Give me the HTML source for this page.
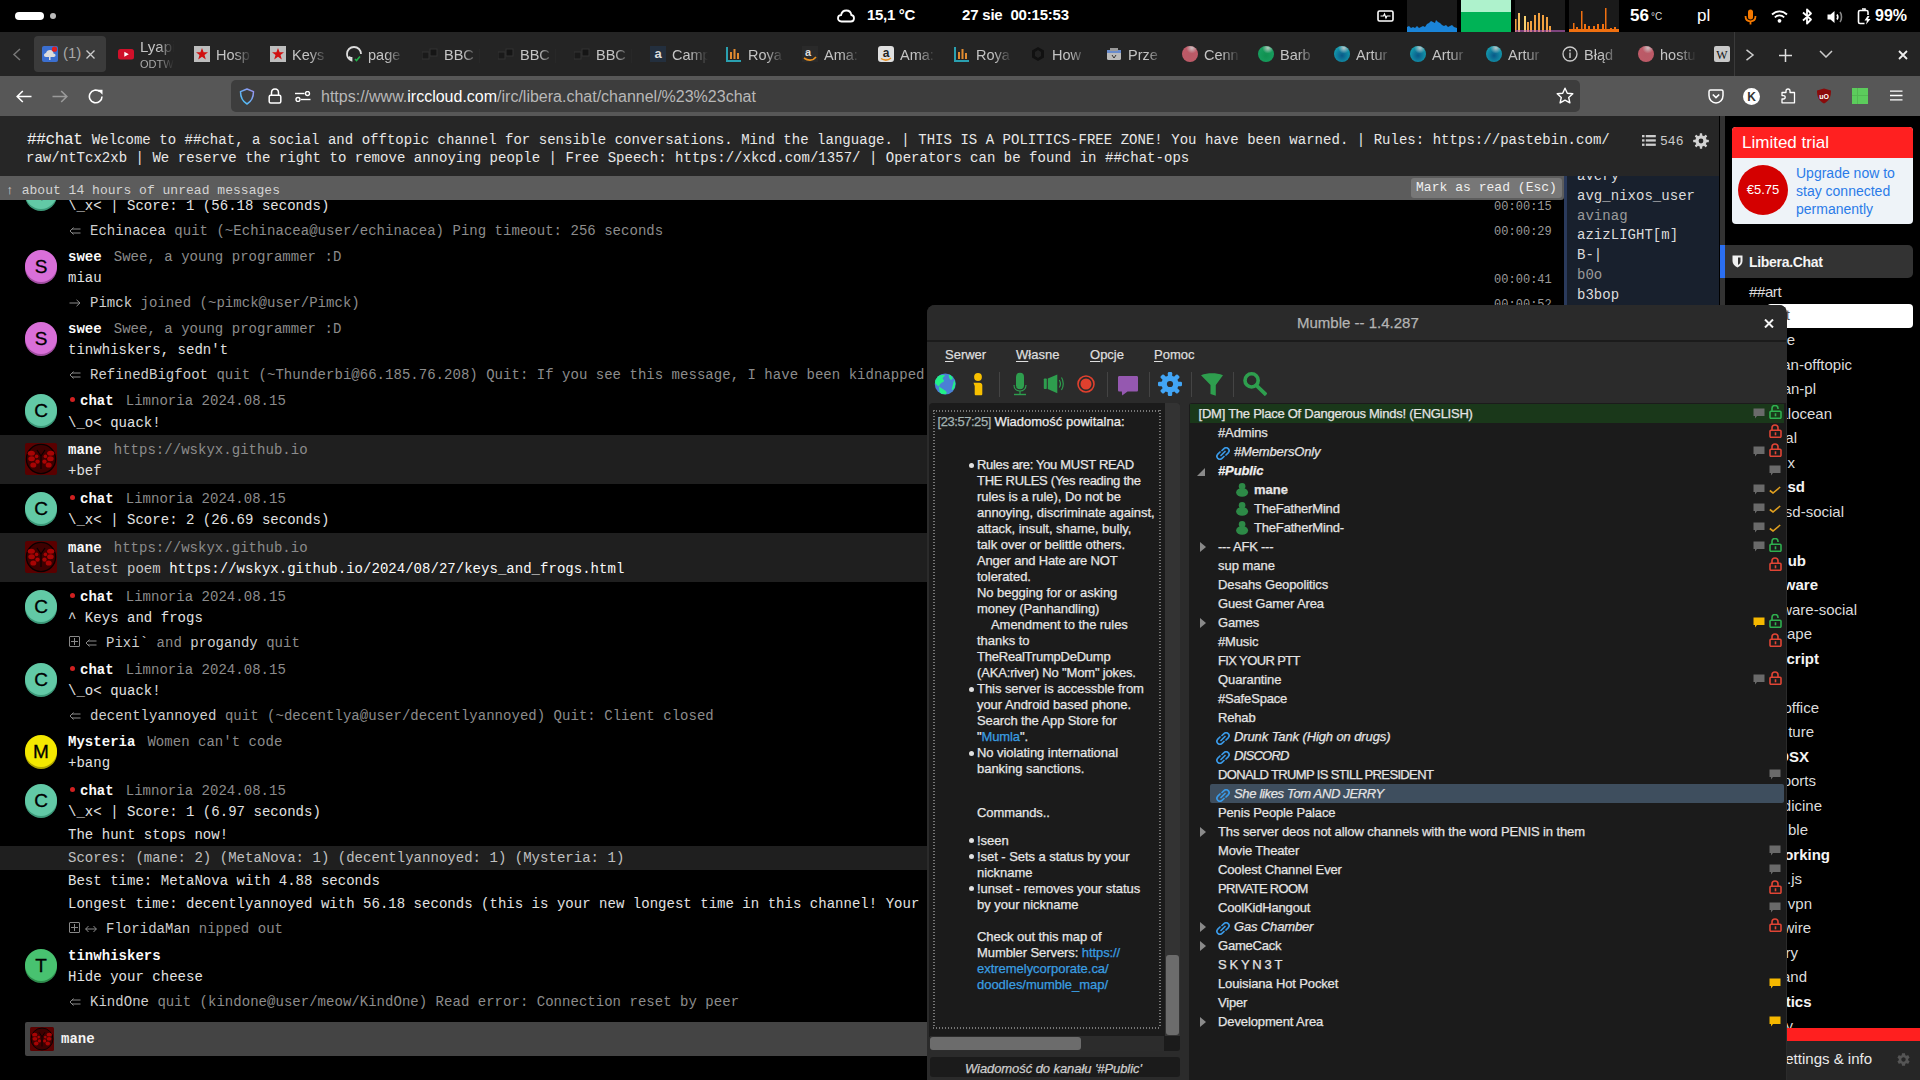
<!DOCTYPE html>
<html><head><meta charset="utf-8">
<style>
*{margin:0;padding:0;box-sizing:border-box}
html,body{width:1920px;height:1080px;overflow:hidden;background:#000;font-family:"Liberation Sans",sans-serif;color:#fff}
.a{position:absolute}
.m{font-family:"Liberation Mono",monospace;letter-spacing:0.002em}
.nw{white-space:nowrap}
/* top bar */
#top{left:0;top:0;width:1920px;height:32px;background:#000}
#tabs{left:0;top:32px;width:1920px;height:44px;background:#242424}
#nav{left:0;top:76px;width:1920px;height:40px;background:#575757}
#url{left:231px;top:80px;width:1349px;height:32px;background:#3d3d3d;border-radius:5px}
/* irc */
#hdr{left:0;top:116px;width:1720px;height:60px;background:#262626}
#unread{left:0;top:176px;width:1564px;height:24px;background:#5c5c5c}
#members{left:1564px;top:176px;width:155px;height:130px;background:#18202d;border-left:3px solid #2a3a5c}
#vsep{left:1719px;top:116px;width:6px;height:964px;background:linear-gradient(90deg,#000 1px,#333 1px)}
#side{left:1722px;top:116px;width:198px;height:964px;background:linear-gradient(90deg,transparent 3px,#000 3px)}
/* mumble */
#mum .nw{-webkit-text-stroke:0.25px currentColor}
#mum{left:927px;top:305px;width:860px;height:775px;background:#2b2b2b;border-radius:8px 8px 0 0;overflow:hidden}
</style></head><body>
<!-- TOP BAR -->
<div id="top" class="a">
 <div class="a" style="left:15px;top:12px;width:29px;height:8px;border-radius:4px;background:#fff"></div>
 <div class="a" style="left:50px;top:13px;width:6px;height:6px;border-radius:3px;background:#bbb"></div>
 <svg class="a" style="left:837px;top:9px" width="18" height="14" viewBox="0 0 18 14"><path d="M4.5 12.5 C2 12.5 1 10.8 1 9.3 C1 7.6 2.3 6.3 4 6.2 C4.6 3.3 6.8 1.5 9.3 1.5 C12 1.5 14 3.5 14.3 6 C16 6.2 17 7.5 17 9.2 C17 11 15.7 12.5 13.7 12.5 Z" fill="none" stroke="#fff" stroke-width="1.8"/></svg>
 <div class="a nw" style="left:867px;top:6px;font-size:15px;font-weight:bold;letter-spacing:-0.3px">15,1 °C</div>
 <div class="a nw" style="left:962px;top:6px;font-size:15px;font-weight:bold;letter-spacing:-0.2px">27 sie&nbsp; 00:15:53</div>
 <svg class="a" style="left:1377px;top:10px" width="17" height="12" viewBox="0 0 17 12"><rect x="1" y="1" width="15" height="10" rx="1.5" fill="none" stroke="#fff" stroke-width="1.6"/><path d="M3.5 6 H6.5 L7.5 4 L9 8 L10 6 H13.5" fill="none" stroke="#fff" stroke-width="1.2"/></svg>
 <div class="a" style="left:1407px;top:0;width:50px;height:32px;background:#1a1a1a;overflow:hidden">
  <svg width="50" height="32" viewBox="0 0 50 32"><path d="M0 32 V27 L2 26 L4 28 L6 27 L8 28 L10 26 L12 28 L14 27 L16 26 L18 27 L20 24 L22 23 L24 21 L26 22 L28 23 L29 20 L31 22 L33 23 L35 25 L37 26 L39 25 L41 27 L43 26 L45 25 L47 27 L50 28 V32 Z" fill="#1a84d8"/></svg>
 </div>
 <div class="a" style="left:1461px;top:0;width:50px;height:12px;background:#aef2cc"></div>
 <div class="a" style="left:1461px;top:12px;width:50px;height:20px;background:#00b356"></div>
 <div class="a" style="left:1515px;top:0;width:50px;height:32px;background:#1a1a1a;overflow:hidden">
  <svg width="50" height="32" viewBox="0 0 50 32"><g fill="#f0a040"><rect x="0" y="19" width="1.5" height="13"/><rect x="3" y="13" width="2" height="19" fill="#f6c060"/><rect x="9" y="16" width="2" height="16" fill="#f8d070"/><rect x="12" y="22" width="2" height="10"/><rect x="15" y="21" width="2" height="11"/><rect x="19" y="15" width="2" height="17"/><rect x="23" y="13" width="2" height="19"/><rect x="27" y="15" width="2" height="17"/><rect x="31" y="17" width="2" height="15"/><rect x="34" y="26" width="2" height="6"/></g><rect x="0" y="30" width="50" height="2" fill="#c060c0" opacity="0.6"/></svg>
 </div>
 <div class="a" style="left:1569px;top:0;width:50px;height:32px;background:#1a1a1a;overflow:hidden">
  <svg width="50" height="32" viewBox="0 0 50 32"><g fill="#f07010"><rect x="4" y="23" width="1.5" height="9"/><rect x="7" y="27" width="2" height="5"/><rect x="12" y="11" width="1.5" height="21"/><rect x="15" y="24" width="2" height="8"/><rect x="19" y="26" width="2" height="6"/><rect x="24" y="26" width="2" height="6"/><rect x="28" y="24" width="2" height="8"/><rect x="33" y="24" width="2" height="8"/><rect x="36" y="8" width="1.5" height="24"/><rect x="41" y="28" width="2" height="4"/><rect x="45" y="27" width="2" height="5"/><rect x="0" y="29" width="50" height="3"/></g></svg>
 </div>
 <div class="a nw" style="left:1630px;top:6px;font-size:17px;font-weight:bold">56</div>
 <div class="a nw" style="left:1651px;top:11px;font-size:10px;color:#ddd">°C</div>
 <div class="a nw" style="left:1697px;top:6px;font-size:17px">pl</div>
 <svg class="a" style="left:1744px;top:9px" width="13" height="16" viewBox="0 0 13 16"><rect x="4" y="0.5" width="5" height="10" rx="2.5" fill="#f57900"/><path d="M1.5 7 C1.5 10.5 3.5 12.3 6.5 12.3 C9.5 12.3 11.5 10.5 11.5 7" fill="none" stroke="#f57900" stroke-width="1.8"/><rect x="5.6" y="12" width="1.8" height="3.5" fill="#f57900"/></svg>
 <svg class="a" style="left:1771px;top:10px" width="17" height="13" viewBox="0 0 17 13"><path d="M1 4.5 C5.5 0.3 11.5 0.3 16 4.5" fill="none" stroke="#fff" stroke-width="1.8"/><path d="M3.8 7.3 C6.5 4.8 10.5 4.8 13.2 7.3" fill="none" stroke="#fff" stroke-width="1.8"/><circle cx="8.5" cy="10.8" r="1.9" fill="#fff"/></svg>
 <svg class="a" style="left:1802px;top:8px" width="11" height="17" viewBox="0 0 11 17"><path d="M1 4.5 L9 11.5 L5 15.5 V1.5 L9 5.5 L1 12.5" fill="none" stroke="#fff" stroke-width="1.8" stroke-linejoin="round"/></svg>
 <svg class="a" style="left:1827px;top:11px" width="17" height="12" viewBox="0 0 17 12"><path d="M0.5 3.5 H3.5 L7.5 0 V12 L3.5 8.5 H0.5 Z" fill="#fff"/><path d="M10 3.5 C11 5 11 7 10 8.5" fill="none" stroke="#fff" stroke-width="1.6"/><path d="M13 1 C15 3.5 15 8.5 13 11" fill="none" stroke="#888" stroke-width="1.6"/></svg>
 <svg class="a" style="left:1857px;top:8px" width="15" height="17" viewBox="0 0 15 17"><path d="M5 1 H8 V2.5" fill="none" stroke="#fff" stroke-width="1.6"/><path d="M7.5 15.5 H3 C2 15.5 1.5 15 1.5 14 V4 C1.5 3 2 2.5 3 2.5 H9.5 C10.5 2.5 11 3 11 4 V7" fill="none" stroke="#fff" stroke-width="1.6"/><path d="M10.5 8 L7.5 12.5 H10 L9 16.5 L13.5 11 H11 L12.5 8 Z" fill="#fff"/></svg>
 <div class="a nw" style="left:1875px;top:7px;font-size:16px;font-weight:bold">99%</div>
</div>

<div id="tabs" class="a">
<svg class="a" style="left:12px;top:16px" width="10" height="13" viewBox="0 0 10 13"><path d="M8 1 L2 6.5 L8 12" fill="none" stroke="#777" stroke-width="1.5"/></svg>
<div class="a" style="left:34px;top:4px;width:72px;height:36px;background:#3b3b3b;border-radius:4px"></div>
<svg class="a" style="left:42px;top:14px" width="16" height="16" viewBox="0 0 16 16"><rect width="16" height="16" rx="2" fill="#3b6fd0"/><path d="M4 11 C2.5 11 2 10 2 9 C2 8 3 7 4 7 C4.5 5 6 4 8 4 C10 4 11.5 5.5 11.5 7.5 C12.5 7.5 13.5 8.3 13.5 9.3 C13.5 10.3 12.8 11 11.8 11 Z" fill="#ddd"/><rect x="7" y="11" width="1.5" height="3" fill="#ddd"/><circle cx="12.5" cy="3.2" r="2.6" fill="#e02020"/></svg>
<div class="a nw" style="left:63px;top:12px;font-size:15px;color:#a8a8a8">(1)</div>
<svg class="a" style="left:86px;top:18px" width="9" height="9" viewBox="0 0 9 9"><path d="M0.5 0.5 L8.5 8.5 M8.5 0.5 L0.5 8.5" stroke="#ccc" stroke-width="1.3"/></svg>
<div class="a" style="left:118px;top:14px;width:16px;height:16px"><svg width="16" height="16" viewBox="0 0 16 16"><rect x="0" y="3" width="16" height="10.5" rx="2.5" fill="#d0102a"/><path d="M6.3 5.8 L10.8 8.3 L6.3 10.7 Z" fill="#fff"/></svg></div>
<div class="a nw tt" style="left:140px;top:7px;font-size:15px;line-height:16px;width:34px;overflow:hidden;color:#c4c4c4;-webkit-mask-image:linear-gradient(90deg,#000 55%,transparent 100%)">Lyapi</div>
<div class="a nw tt" style="left:140px;top:26px;font-size:11px;line-height:12px;width:34px;overflow:hidden;color:#aaa;-webkit-mask-image:linear-gradient(90deg,#000 55%,transparent 100%)">ODTW</div>
<div class="a" style="left:194px;top:14px;width:16px;height:16px"><svg width="16" height="16" viewBox="0 0 16 16"><rect width="16" height="16" fill="#bdbdbd"/><path d="M8 2 L9.6 6.3 L14 6.3 L10.5 9 L11.8 13.5 L8 10.8 L4.2 13.5 L5.5 9 L2 6.3 L6.4 6.3 Z" fill="#d01010"/></svg></div>
<div class="a nw tt" style="left:216px;top:14px;font-size:14.5px;line-height:18px;width:36px;overflow:hidden;color:#c4c4c4;-webkit-mask-image:linear-gradient(90deg,#000 50%,transparent 100%)">Hosp</div>
<div class="a" style="left:270px;top:14px;width:16px;height:16px"><svg width="16" height="16" viewBox="0 0 16 16"><rect width="16" height="16" fill="#bdbdbd"/><path d="M8 2 L9.6 6.3 L14 6.3 L10.5 9 L11.8 13.5 L8 10.8 L4.2 13.5 L5.5 9 L2 6.3 L6.4 6.3 Z" fill="#d01010"/></svg></div>
<div class="a nw tt" style="left:292px;top:14px;font-size:14.5px;line-height:18px;width:36px;overflow:hidden;color:#c4c4c4;-webkit-mask-image:linear-gradient(90deg,#000 50%,transparent 100%)">Keys</div>
<div class="a" style="left:346px;top:14px;width:16px;height:16px"><svg width="16" height="16" viewBox="0 0 16 16"><path d="M8 1 C4 1 1 4 1 8 C1 11 3 13.5 5.5 14.5 C5.5 13.5 5.5 12.5 5.5 12 C4 12 3.5 11 3.2 10.5 M8 1 C12 1 15 4 15 8" fill="none" stroke="#ddd" stroke-width="1.8"/><path d="M9 13 L10.5 14.5 L14 10.5" fill="none" stroke="#22b04a" stroke-width="1.6"/></svg></div>
<div class="a nw tt" style="left:368px;top:14px;font-size:14.5px;line-height:18px;width:36px;overflow:hidden;color:#c4c4c4;-webkit-mask-image:linear-gradient(90deg,#000 50%,transparent 100%)">page</div>
<div class="a" style="left:422px;top:14px;width:16px;height:16px"><svg width="16" height="16" viewBox="0 0 16 16"><rect x="0" y="6" width="7" height="7" fill="#1a1a1a" stroke="#333"/><rect x="8" y="3" width="7" height="7" fill="#151515" stroke="#333"/></svg></div>
<div class="a nw tt" style="left:444px;top:14px;font-size:14.5px;line-height:18px;width:36px;overflow:hidden;color:#c4c4c4;-webkit-mask-image:linear-gradient(90deg,#000 50%,transparent 100%)">BBC | W</div>
<div class="a" style="left:498px;top:14px;width:16px;height:16px"><svg width="16" height="16" viewBox="0 0 16 16"><rect x="0" y="6" width="7" height="7" fill="#1a1a1a" stroke="#333"/><rect x="8" y="3" width="7" height="7" fill="#151515" stroke="#333"/></svg></div>
<div class="a nw tt" style="left:520px;top:14px;font-size:14.5px;line-height:18px;width:36px;overflow:hidden;color:#c4c4c4;-webkit-mask-image:linear-gradient(90deg,#000 50%,transparent 100%)">BBC | W</div>
<div class="a" style="left:574px;top:14px;width:16px;height:16px"><svg width="16" height="16" viewBox="0 0 16 16"><rect x="0" y="6" width="7" height="7" fill="#1a1a1a" stroke="#333"/><rect x="8" y="3" width="7" height="7" fill="#151515" stroke="#333"/></svg></div>
<div class="a nw tt" style="left:596px;top:14px;font-size:14.5px;line-height:18px;width:36px;overflow:hidden;color:#c4c4c4;-webkit-mask-image:linear-gradient(90deg,#000 50%,transparent 100%)">BBC | W</div>
<div class="a" style="left:650px;top:14px;width:16px;height:16px"><svg width="16" height="16" viewBox="0 0 16 16"><rect width="16" height="16" fill="#232f3e"/><text x="8" y="12" font-size="13" font-weight="bold" fill="#ddd" text-anchor="middle" font-family="Liberation Sans">a</text></svg></div>
<div class="a nw tt" style="left:672px;top:14px;font-size:14.5px;line-height:18px;width:36px;overflow:hidden;color:#c4c4c4;-webkit-mask-image:linear-gradient(90deg,#000 50%,transparent 100%)">Camp</div>
<div class="a" style="left:726px;top:14px;width:16px;height:16px"><svg width="16" height="16" viewBox="0 0 16 16"><path d="M1 1 V15 H15" fill="none" stroke="#2aa0b0" stroke-width="2"/><rect x="4" y="6" width="2" height="7" fill="#e08a30"/><rect x="7.5" y="3" width="2" height="10" fill="#e08a30"/><rect x="11" y="7" width="2" height="6" fill="#e08a30"/></svg></div>
<div class="a nw tt" style="left:748px;top:14px;font-size:14.5px;line-height:18px;width:36px;overflow:hidden;color:#c4c4c4;-webkit-mask-image:linear-gradient(90deg,#000 50%,transparent 100%)">Roya</div>
<div class="a" style="left:802px;top:14px;width:16px;height:16px"><svg width="16" height="16" viewBox="0 0 16 16"><rect width="16" height="16" fill="#2a2a2a"/><text x="6" y="10" font-size="11" font-weight="bold" fill="#ddd" text-anchor="middle" font-family="Liberation Sans">a</text><path d="M2 12 C6 15 11 15 14 11" fill="none" stroke="#e89020" stroke-width="1.6"/></svg></div>
<div class="a nw tt" style="left:824px;top:14px;font-size:14.5px;line-height:18px;width:36px;overflow:hidden;color:#c4c4c4;-webkit-mask-image:linear-gradient(90deg,#000 50%,transparent 100%)">Ama:</div>
<div class="a" style="left:878px;top:14px;width:16px;height:16px"><svg width="16" height="16" viewBox="0 0 16 16"><rect width="16" height="16" rx="3" fill="#e0e0e0"/><text x="8" y="11" font-size="12" font-weight="bold" fill="#222" text-anchor="middle" font-family="Liberation Sans">a</text><path d="M3 12.5 C6 14.5 10 14.5 13 12" fill="none" stroke="#e89020" stroke-width="1.5"/></svg></div>
<div class="a nw tt" style="left:900px;top:14px;font-size:14.5px;line-height:18px;width:36px;overflow:hidden;color:#c4c4c4;-webkit-mask-image:linear-gradient(90deg,#000 50%,transparent 100%)">Ama:</div>
<div class="a" style="left:954px;top:14px;width:16px;height:16px"><svg width="16" height="16" viewBox="0 0 16 16"><path d="M1 1 V15 H15" fill="none" stroke="#2aa0b0" stroke-width="2"/><rect x="4" y="6" width="2" height="7" fill="#e08a30"/><rect x="7.5" y="3" width="2" height="10" fill="#e08a30"/><rect x="11" y="7" width="2" height="6" fill="#e08a30"/></svg></div>
<div class="a nw tt" style="left:976px;top:14px;font-size:14.5px;line-height:18px;width:36px;overflow:hidden;color:#c4c4c4;-webkit-mask-image:linear-gradient(90deg,#000 50%,transparent 100%)">Roya</div>
<div class="a" style="left:1030px;top:14px;width:16px;height:16px"><svg width="16" height="16" viewBox="0 0 16 16"><path d="M8 1 L14 4.5 V11.5 L8 15 L2 11.5 V4.5 Z" fill="#111"/><path d="M8 4 L11 6 V10 L8 12 L5 10 V6 Z" fill="#222"/></svg></div>
<div class="a nw tt" style="left:1052px;top:14px;font-size:14.5px;line-height:18px;width:36px;overflow:hidden;color:#c4c4c4;-webkit-mask-image:linear-gradient(90deg,#000 50%,transparent 100%)">How</div>
<div class="a" style="left:1106px;top:14px;width:16px;height:16px"><svg width="16" height="16" viewBox="0 0 16 16"><rect x="1" y="4" width="14" height="10" rx="1.5" fill="#bbb"/><rect x="1" y="4" width="14" height="3" fill="#6a8ccc"/><rect x="4" y="2" width="8" height="3" fill="#999"/><path d="M6 9 L8 12 L10 9" stroke="#333" fill="none"/></svg></div>
<div class="a nw tt" style="left:1128px;top:14px;font-size:14.5px;line-height:18px;width:36px;overflow:hidden;color:#c4c4c4;-webkit-mask-image:linear-gradient(90deg,#000 50%,transparent 100%)">Prze</div>
<div class="a" style="left:1182px;top:14px;width:16px;height:16px"><svg width="16" height="16" viewBox="0 0 16 16"><defs><radialGradient id="gc05a68b85a66" cx="0.5" cy="0.6" r="0.6"><stop offset="0" stop-color="#b85a66"/><stop offset="1" stop-color="#c05a68"/></radialGradient><radialGradient id="hgc05a68b85a66" cx="0.62" cy="0.12" r="0.35"><stop offset="0" stop-color="#cccccc" stop-opacity="0.9"/><stop offset="1" stop-color="#cccccc" stop-opacity="0"/></radialGradient></defs><circle cx="8" cy="8" r="8" fill="url(#gc05a68b85a66)"/><circle cx="8" cy="8" r="8" fill="url(#hgc05a68b85a66)"/></svg></div>
<div class="a nw tt" style="left:1204px;top:14px;font-size:14.5px;line-height:18px;width:36px;overflow:hidden;color:#c4c4c4;-webkit-mask-image:linear-gradient(90deg,#000 50%,transparent 100%)">Cenn</div>
<div class="a" style="left:1258px;top:14px;width:16px;height:16px"><svg width="16" height="16" viewBox="0 0 16 16"><defs><radialGradient id="g18a060109050" cx="0.5" cy="0.6" r="0.6"><stop offset="0" stop-color="#109050"/><stop offset="1" stop-color="#18a060"/></radialGradient><radialGradient id="hg18a060109050" cx="0.62" cy="0.12" r="0.35"><stop offset="0" stop-color="#cccccc" stop-opacity="0.9"/><stop offset="1" stop-color="#cccccc" stop-opacity="0"/></radialGradient></defs><circle cx="8" cy="8" r="8" fill="url(#g18a060109050)"/><circle cx="8" cy="8" r="8" fill="url(#hg18a060109050)"/></svg></div>
<div class="a nw tt" style="left:1280px;top:14px;font-size:14.5px;line-height:18px;width:36px;overflow:hidden;color:#c4c4c4;-webkit-mask-image:linear-gradient(90deg,#000 50%,transparent 100%)">Barb</div>
<div class="a" style="left:1334px;top:14px;width:16px;height:16px"><svg width="16" height="16" viewBox="0 0 16 16"><defs><radialGradient id="g14a0b00a5888" cx="0.5" cy="0.6" r="0.6"><stop offset="0" stop-color="#0a5888"/><stop offset="1" stop-color="#14a0b0"/></radialGradient><radialGradient id="hg14a0b00a5888" cx="0.62" cy="0.12" r="0.35"><stop offset="0" stop-color="#cccccc" stop-opacity="0.9"/><stop offset="1" stop-color="#cccccc" stop-opacity="0"/></radialGradient></defs><circle cx="8" cy="8" r="8" fill="url(#g14a0b00a5888)"/><circle cx="8" cy="8" r="8" fill="url(#hg14a0b00a5888)"/></svg></div>
<div class="a nw tt" style="left:1356px;top:14px;font-size:14.5px;line-height:18px;width:36px;overflow:hidden;color:#c4c4c4;-webkit-mask-image:linear-gradient(90deg,#000 50%,transparent 100%)">Artur</div>
<div class="a" style="left:1410px;top:14px;width:16px;height:16px"><svg width="16" height="16" viewBox="0 0 16 16"><defs><radialGradient id="g14a0b00a5888" cx="0.5" cy="0.6" r="0.6"><stop offset="0" stop-color="#0a5888"/><stop offset="1" stop-color="#14a0b0"/></radialGradient><radialGradient id="hg14a0b00a5888" cx="0.62" cy="0.12" r="0.35"><stop offset="0" stop-color="#cccccc" stop-opacity="0.9"/><stop offset="1" stop-color="#cccccc" stop-opacity="0"/></radialGradient></defs><circle cx="8" cy="8" r="8" fill="url(#g14a0b00a5888)"/><circle cx="8" cy="8" r="8" fill="url(#hg14a0b00a5888)"/></svg></div>
<div class="a nw tt" style="left:1432px;top:14px;font-size:14.5px;line-height:18px;width:36px;overflow:hidden;color:#c4c4c4;-webkit-mask-image:linear-gradient(90deg,#000 50%,transparent 100%)">Artur</div>
<div class="a" style="left:1486px;top:14px;width:16px;height:16px"><svg width="16" height="16" viewBox="0 0 16 16"><defs><radialGradient id="g14a0b00a5888" cx="0.5" cy="0.6" r="0.6"><stop offset="0" stop-color="#0a5888"/><stop offset="1" stop-color="#14a0b0"/></radialGradient><radialGradient id="hg14a0b00a5888" cx="0.62" cy="0.12" r="0.35"><stop offset="0" stop-color="#cccccc" stop-opacity="0.9"/><stop offset="1" stop-color="#cccccc" stop-opacity="0"/></radialGradient></defs><circle cx="8" cy="8" r="8" fill="url(#g14a0b00a5888)"/><circle cx="8" cy="8" r="8" fill="url(#hg14a0b00a5888)"/></svg></div>
<div class="a nw tt" style="left:1508px;top:14px;font-size:14.5px;line-height:18px;width:36px;overflow:hidden;color:#c4c4c4;-webkit-mask-image:linear-gradient(90deg,#000 50%,transparent 100%)">Artur</div>
<div class="a" style="left:1562px;top:14px;width:16px;height:16px"><svg width="16" height="16" viewBox="0 0 16 16"><circle cx="8" cy="8" r="7" fill="none" stroke="#ccc" stroke-width="1.3"/><rect x="7.3" y="6.5" width="1.4" height="5.5" fill="#ccc"/><circle cx="8" cy="4.5" r="0.9" fill="#ccc"/></svg></div>
<div class="a nw tt" style="left:1584px;top:14px;font-size:14.5px;line-height:18px;width:36px;overflow:hidden;color:#c4c4c4;-webkit-mask-image:linear-gradient(90deg,#000 50%,transparent 100%)">Błąd</div>
<div class="a" style="left:1638px;top:14px;width:16px;height:16px"><svg width="16" height="16" viewBox="0 0 16 16"><defs><radialGradient id="gc05a68b85a66" cx="0.5" cy="0.6" r="0.6"><stop offset="0" stop-color="#b85a66"/><stop offset="1" stop-color="#c05a68"/></radialGradient><radialGradient id="hgc05a68b85a66" cx="0.62" cy="0.12" r="0.35"><stop offset="0" stop-color="#cccccc" stop-opacity="0.9"/><stop offset="1" stop-color="#cccccc" stop-opacity="0"/></radialGradient></defs><circle cx="8" cy="8" r="8" fill="url(#gc05a68b85a66)"/><circle cx="8" cy="8" r="8" fill="url(#hgc05a68b85a66)"/></svg></div>
<div class="a nw tt" style="left:1660px;top:14px;font-size:14.5px;line-height:18px;width:36px;overflow:hidden;color:#c4c4c4;-webkit-mask-image:linear-gradient(90deg,#000 50%,transparent 100%)">hostu</div>
<div class="a" style="left:1714px;top:14px;width:16px;height:16px"><svg width="16" height="16" viewBox="0 0 16 16"><rect width="16" height="16" rx="2" fill="#c8c8c8"/><text x="8" y="12.5" font-size="12" fill="#111" text-anchor="middle" font-family="Liberation Serif">W</text></svg></div>
<div class="a" style="left:1734px;top:0;width:1px;height:44px;background:#3a3a3a"></div>
<svg class="a" style="left:1745px;top:17px" width="10" height="12" viewBox="0 0 10 12"><path d="M1.5 0.8 L8 6 L1.5 11.2" fill="none" stroke="#ccc" stroke-width="1.5"/></svg>
<svg class="a" style="left:1779px;top:17px" width="13" height="13" viewBox="0 0 13 13"><path d="M6.5 0 V13 M0 6.5 H13" stroke="#ddd" stroke-width="1.5"/></svg>
<svg class="a" style="left:1819px;top:18px" width="14" height="8" viewBox="0 0 14 8"><path d="M1 1 L7 7 L13 1" fill="none" stroke="#ccc" stroke-width="1.5"/></svg>
<svg class="a" style="left:1898px;top:18px" width="10" height="10" viewBox="0 0 10 10"><path d="M1 1 L9 9 M9 1 L1 9" stroke="#eee" stroke-width="1.8"/></svg>
</div>
<div id="nav" class="a">
 <svg class="a" style="left:16px;top:14px" width="16" height="13" viewBox="0 0 16 13"><path d="M15.5 6.5 H1.5 M6.8 1 L1.2 6.5 L6.8 12" fill="none" stroke="#fff" stroke-width="1.6"/></svg>
 <svg class="a" style="left:52px;top:14px" width="16" height="13" viewBox="0 0 16 13"><path d="M0.5 6.5 H14.5 M9.2 1 L14.8 6.5 L9.2 12" fill="none" stroke="#9a9a9a" stroke-width="1.6"/></svg>
 <svg class="a" style="left:88px;top:13px" width="16" height="15" viewBox="0 0 16 15"><path d="M14 7.5 A6.3 6.3 0 1 1 11.8 2.7" fill="none" stroke="#fff" stroke-width="1.6"/><path d="M9.5 0.8 H14.5 V5.8 Z" fill="#fff"/></svg>
 <div id="url" class="a" style="left:231px;top:4px"></div>
 <svg class="a" style="left:239px;top:12px" width="16" height="17" viewBox="0 0 16 17"><defs><linearGradient id="sh" x1="0" y1="1" x2="1" y2="0"><stop offset="0" stop-color="#40c8f8"/><stop offset="1" stop-color="#a090f0"/></linearGradient></defs><path d="M8 1 L14.5 3.6 C14.5 9.5 12.5 13.5 8 16 C3.5 13.5 1.5 9.5 1.5 3.6 Z" fill="none" stroke="url(#sh)" stroke-width="1.5" stroke-linejoin="round"/></svg>
 <svg class="a" style="left:268px;top:12px" width="14" height="16" viewBox="0 0 14 16"><path d="M3.5 7.5 V4.8 C3.5 2.5 5 1 7 1 C9 1 10.5 2.5 10.5 4.8 V7.5" fill="none" stroke="#fff" stroke-width="1.5"/><rect x="1.2" y="7.3" width="11.6" height="7.8" rx="1.5" fill="none" stroke="#fff" stroke-width="1.5"/></svg>
 <svg class="a" style="left:295px;top:15px" width="16" height="11" viewBox="0 0 16 11"><path d="M0 2.5 H9.5" stroke="#fff" stroke-width="1.4"/><circle cx="12.5" cy="2.5" r="2" fill="none" stroke="#fff" stroke-width="1.4"/><path d="M6 8.5 H15.5" stroke="#fff" stroke-width="1.4"/><circle cx="3" cy="8.5" r="2" fill="none" stroke="#fff" stroke-width="1.4"/></svg>
 <div class="a nw" style="left:321px;top:12px;font-size:16px;color:#b8b8b8">https://www.<span style="color:#fff">irccloud.com</span>/irc/libera.chat/channel/%23%23chat</div>
 <svg class="a" style="left:1556px;top:11px" width="18" height="18" viewBox="0 0 18 18"><path d="M9 1.2 L11.3 6.2 L16.8 6.8 L12.7 10.5 L13.9 15.9 L9 13.1 L4.1 15.9 L5.3 10.5 L1.2 6.8 L6.7 6.2 Z" fill="none" stroke="#fff" stroke-width="1.4" stroke-linejoin="round"/></svg>
 <svg class="a" style="left:1708px;top:13px" width="16" height="15" viewBox="0 0 16 15"><path d="M2.5 1 H13.5 C14.5 1 15 1.5 15 2.5 V6.5 C15 10.5 12 14 8 14 C4 14 1 10.5 1 6.5 V2.5 C1 1.5 1.5 1 2.5 1 Z" fill="none" stroke="#fff" stroke-width="1.5"/><path d="M4.8 5.5 L8 8.6 L11.2 5.5" fill="none" stroke="#fff" stroke-width="1.7"/></svg>
 <svg class="a" style="left:1743px;top:12px" width="17" height="17" viewBox="0 0 17 17"><circle cx="8.5" cy="8.5" r="8.5" fill="#fff"/><text x="8.6" y="13" font-size="12" font-weight="bold" fill="#333" text-anchor="middle" font-family="Liberation Sans">K</text></svg>
 <svg class="a" style="left:1781px;top:12px" width="16" height="16" viewBox="0 0 16 16"><path d="M7 1 C8.3 1 9 1.8 9 3 V4.5 H13.5 V14.8 H1 V11 H2.5 C3.5 11 4.2 10.3 4.2 9.3 C4.2 8.3 3.5 7.6 2.5 7.6 H1 V4.5 H5 V3 C5 1.8 5.7 1 7 1 Z" fill="none" stroke="#fff" stroke-width="1.3" stroke-linejoin="round"/></svg>
 <svg class="a" style="left:1816px;top:12px" width="16" height="16" viewBox="0 0 16 16"><path d="M8 0.5 L15 2.5 C15 9 13 13 8 15.5 C3 13 1 9 1 2.5 Z" fill="#8a0a0a"/><text x="8" y="10.5" font-size="7" font-weight="bold" fill="#fff" text-anchor="middle" font-family="Liberation Sans">uO</text></svg>
 <div class="a" style="left:1852px;top:12px;width:16px;height:16px;background:#5ccc5c"><div style="position:absolute;left:5px;top:0;width:1px;height:16px;background:#52b852"></div><div style="position:absolute;left:0;top:7px;width:16px;height:1px;background:#52b852"></div></div>
 <svg class="a" style="left:1890px;top:14px" width="13" height="11" viewBox="0 0 13 11"><path d="M0 1.1 H12.5 M0 5.5 H12.5 M0 9.8 H12.5" stroke="#fff" stroke-width="1.3"/></svg>
</div>

<div id="chat" class="a" style="left:0;top:200px;width:1566px;height:880px;overflow:hidden;background:#000">
</div>
<div class="a" style="left:0;top:435px;width:1566px;height:49px;background:#1f1f1f"></div>
<div class="a" style="left:0;top:533px;width:1566px;height:49px;background:#1f1f1f"></div>
<div class="a" style="left:0;top:846px;width:1566px;height:24px;background:#1f1f1f"></div>
<div class="a" style="left:25px;top:179px;width:32px;height:32px;border-radius:16px;background:#3d9a7a"></div>
<div class="a" style="left:25px;top:177px;width:32px;height:32px;border-radius:16px;background:#62c9a6;color:#000;font-size:19px;line-height:34px;text-align:center;-webkit-text-stroke:0.3px #000">C</div>
<div class="a m nw" style="left:68px;top:199.3px;font-size:14px;line-height:14px;color:#e2e2e2;">\_x&lt; | Score: 1 (56.18 seconds)</div>
<svg class="a" style="left:69px;top:227px" width="12" height="8" viewBox="0 0 12 8"><path d="M11.5 2 H3 M11.5 6 H3 M4.5 0.5 L1 4 L4.5 7.5" fill="none" stroke="#8a8a8a" stroke-width="1"/></svg>
<div class="a m nw" style="left:90px;top:224.3px;font-size:14px;line-height:14px;color:#cfcfcf;">Echinacea</div>
<div class="a m nw" style="left:174.3px;top:224.3px;font-size:14px;line-height:14px;color:#8c8c8c;">quit (~Echinacea@user/echinacea) Ping timeout: 256 seconds</div>
<div class="a" style="left:25px;top:252px;width:32px;height:32px;border-radius:16px;background:#a24ea2"></div>
<div class="a" style="left:25px;top:250px;width:32px;height:32px;border-radius:16px;background:#d96fd9;color:#000;font-size:19px;line-height:34px;text-align:center;-webkit-text-stroke:0.3px #000">S</div>
<div class="a m nw" style="left:68px;top:250.3px;font-size:14px;line-height:14px;color:#fafafa;font-weight:bold;">swee</div>
<div class="a m nw" style="left:113.72px;top:250.3px;font-size:14px;line-height:14px;color:#8c8c8c;">Swee, a young programmer :D</div>
<div class="a m nw" style="left:68px;top:271.3px;font-size:14px;line-height:14px;color:#e2e2e2;">miau</div>
<svg class="a" style="left:69px;top:299px" width="12" height="8" viewBox="0 0 12 8"><path d="M0.5 4 H11 M7.5 0.8 L11 4 L7.5 7.2" fill="none" stroke="#8a8a8a" stroke-width="1"/></svg>
<div class="a m nw" style="left:90px;top:296.3px;font-size:14px;line-height:14px;color:#cfcfcf;">Pimck</div>
<div class="a m nw" style="left:140.58px;top:296.3px;font-size:14px;line-height:14px;color:#8c8c8c;">joined (~pimck@user/Pimck)</div>
<div class="a" style="left:25px;top:324px;width:32px;height:32px;border-radius:16px;background:#a24ea2"></div>
<div class="a" style="left:25px;top:322px;width:32px;height:32px;border-radius:16px;background:#d96fd9;color:#000;font-size:19px;line-height:34px;text-align:center;-webkit-text-stroke:0.3px #000">S</div>
<div class="a m nw" style="left:68px;top:322.3px;font-size:14px;line-height:14px;color:#fafafa;font-weight:bold;">swee</div>
<div class="a m nw" style="left:113.72px;top:322.3px;font-size:14px;line-height:14px;color:#8c8c8c;">Swee, a young programmer :D</div>
<div class="a m nw" style="left:68px;top:343.3px;font-size:14px;line-height:14px;color:#e2e2e2;">tinwhiskers, sedn't</div>
<svg class="a" style="left:69px;top:371px" width="12" height="8" viewBox="0 0 12 8"><path d="M11.5 2 H3 M11.5 6 H3 M4.5 0.5 L1 4 L4.5 7.5" fill="none" stroke="#8a8a8a" stroke-width="1"/></svg>
<div class="a m nw" style="left:90px;top:368.3px;font-size:14px;line-height:14px;color:#cfcfcf;">RefinedBigfoot</div>
<div class="a m nw" style="left:216.45px;top:368.3px;font-size:14px;line-height:14px;color:#8c8c8c;">quit (~Thunderbi@66.185.76.208) Quit: If you see this message, I have been kidnapped by</div>
<div class="a" style="left:25px;top:396px;width:32px;height:32px;border-radius:16px;background:#3d9a7a"></div>
<div class="a" style="left:25px;top:394px;width:32px;height:32px;border-radius:16px;background:#62c9a6;color:#000;font-size:19px;line-height:34px;text-align:center;-webkit-text-stroke:0.3px #000">C</div>
<div class="a" style="left:70px;top:397px;width:5px;height:5px;border-radius:3px;background:#d02020"></div>
<div class="a m nw" style="left:80px;top:394.3px;font-size:14px;line-height:14px;color:#fafafa;font-weight:bold;">chat</div>
<div class="a m nw" style="left:125.72px;top:394.3px;font-size:14px;line-height:14px;color:#8c8c8c;">Limnoria 2024.08.15</div>
<div class="a m nw" style="left:68px;top:416.3px;font-size:14px;line-height:14px;color:#e2e2e2;">\_o&lt; quack!</div>
<div class="a" style="left:25px;top:443px;width:32px;height:32px"><svg width="32" height="32" viewBox="0 0 32 32"><rect width="32" height="32" rx="2" fill="#5a0000"/><circle cx="16" cy="16" r="14.6" fill="#3e0000" stroke="#0a0000" stroke-width="1.3"/><g fill="#a80404"><ellipse cx="6.3" cy="10.3" rx="3.6" ry="2.5"/><ellipse cx="25.7" cy="10.3" rx="3.6" ry="2.5"/><ellipse cx="6.6" cy="15.8" rx="3.3" ry="2.5"/><ellipse cx="25.4" cy="15.8" rx="3.3" ry="2.5"/><ellipse cx="8.3" cy="22" rx="3" ry="2.6"/><ellipse cx="23.7" cy="22" rx="3" ry="2.6"/><circle cx="11.6" cy="13.4" r="1.8"/><circle cx="20.4" cy="13.4" r="1.8"/><circle cx="12.5" cy="18.6" r="2.2"/><circle cx="19.5" cy="18.6" r="2.2"/></g><path d="M16 13 V26 M16 13 L12 7 M16 13 L20 7" stroke="#0a0000" stroke-width="1.2" fill="none"/></svg></div>
<div class="a m nw" style="left:68px;top:443.3px;font-size:14px;line-height:14px;color:#fafafa;font-weight:bold;">mane</div>
<div class="a m nw" style="left:113.72px;top:443.3px;font-size:14px;line-height:14px;color:#8c8c8c;">https://wskyx.github.io</div>
<div class="a m nw" style="left:68px;top:464.3px;font-size:14px;line-height:14px;color:#e2e2e2;">+bef</div>
<div class="a" style="left:25px;top:494px;width:32px;height:32px;border-radius:16px;background:#3d9a7a"></div>
<div class="a" style="left:25px;top:492px;width:32px;height:32px;border-radius:16px;background:#62c9a6;color:#000;font-size:19px;line-height:34px;text-align:center;-webkit-text-stroke:0.3px #000">C</div>
<div class="a" style="left:70px;top:495px;width:5px;height:5px;border-radius:3px;background:#d02020"></div>
<div class="a m nw" style="left:80px;top:492.3px;font-size:14px;line-height:14px;color:#fafafa;font-weight:bold;">chat</div>
<div class="a m nw" style="left:125.72px;top:492.3px;font-size:14px;line-height:14px;color:#8c8c8c;">Limnoria 2024.08.15</div>
<div class="a m nw" style="left:68px;top:513.3px;font-size:14px;line-height:14px;color:#e2e2e2;">\_x&lt; | Score: 2 (26.69 seconds)</div>
<div class="a" style="left:25px;top:541px;width:32px;height:32px"><svg width="32" height="32" viewBox="0 0 32 32"><rect width="32" height="32" rx="2" fill="#5a0000"/><circle cx="16" cy="16" r="14.6" fill="#3e0000" stroke="#0a0000" stroke-width="1.3"/><g fill="#a80404"><ellipse cx="6.3" cy="10.3" rx="3.6" ry="2.5"/><ellipse cx="25.7" cy="10.3" rx="3.6" ry="2.5"/><ellipse cx="6.6" cy="15.8" rx="3.3" ry="2.5"/><ellipse cx="25.4" cy="15.8" rx="3.3" ry="2.5"/><ellipse cx="8.3" cy="22" rx="3" ry="2.6"/><ellipse cx="23.7" cy="22" rx="3" ry="2.6"/><circle cx="11.6" cy="13.4" r="1.8"/><circle cx="20.4" cy="13.4" r="1.8"/><circle cx="12.5" cy="18.6" r="2.2"/><circle cx="19.5" cy="18.6" r="2.2"/></g><path d="M16 13 V26 M16 13 L12 7 M16 13 L20 7" stroke="#0a0000" stroke-width="1.2" fill="none"/></svg></div>
<div class="a m nw" style="left:68px;top:541.3px;font-size:14px;line-height:14px;color:#fafafa;font-weight:bold;">mane</div>
<div class="a m nw" style="left:113.72px;top:541.3px;font-size:14px;line-height:14px;color:#8c8c8c;">https://wskyx.github.io</div>
<div class="a m nw" style="left:68px;top:562.3px;font-size:14px;line-height:14px;color:#c8c8c8;">latest poem <span style="color:#fafafa">https://wskyx.github.io/2024/08/27/keys_and_frogs.html</span></div>
<div class="a" style="left:25px;top:592px;width:32px;height:32px;border-radius:16px;background:#3d9a7a"></div>
<div class="a" style="left:25px;top:590px;width:32px;height:32px;border-radius:16px;background:#62c9a6;color:#000;font-size:19px;line-height:34px;text-align:center;-webkit-text-stroke:0.3px #000">C</div>
<div class="a" style="left:70px;top:593px;width:5px;height:5px;border-radius:3px;background:#d02020"></div>
<div class="a m nw" style="left:80px;top:590.3px;font-size:14px;line-height:14px;color:#fafafa;font-weight:bold;">chat</div>
<div class="a m nw" style="left:125.72px;top:590.3px;font-size:14px;line-height:14px;color:#8c8c8c;">Limnoria 2024.08.15</div>
<div class="a m nw" style="left:68px;top:611.3px;font-size:14px;line-height:14px;color:#e2e2e2;">^ Keys and frogs</div>
<div class="a" style="left:69px;top:636px;width:11px;height:11px;border:1px solid #888;border-radius:1px"><div style="position:absolute;left:4px;top:1px;width:1px;height:7px;background:#888"></div><div style="position:absolute;left:1px;top:4px;width:7px;height:1px;background:#888"></div></div>
<svg class="a" style="left:85px;top:639px" width="12" height="8" viewBox="0 0 12 8"><path d="M11.5 2 H3 M11.5 6 H3 M4.5 0.5 L1 4 L4.5 7.5" fill="none" stroke="#8a8a8a" stroke-width="1"/></svg>
<div class="a m nw" style="left:106px;top:636.3px;font-size:14px;line-height:14px;color:#cfcfcf;">Pixi`</div>
<div class="a m nw" style="left:156.58px;top:636.3px;font-size:14px;line-height:14px;color:#8c8c8c;"><span style="color:#8c8c8c">and</span> <span style="color:#cfcfcf">progandy</span> quit</div>
<div class="a" style="left:25px;top:665px;width:32px;height:32px;border-radius:16px;background:#3d9a7a"></div>
<div class="a" style="left:25px;top:663px;width:32px;height:32px;border-radius:16px;background:#62c9a6;color:#000;font-size:19px;line-height:34px;text-align:center;-webkit-text-stroke:0.3px #000">C</div>
<div class="a" style="left:70px;top:666px;width:5px;height:5px;border-radius:3px;background:#d02020"></div>
<div class="a m nw" style="left:80px;top:663.3px;font-size:14px;line-height:14px;color:#fafafa;font-weight:bold;">chat</div>
<div class="a m nw" style="left:125.72px;top:663.3px;font-size:14px;line-height:14px;color:#8c8c8c;">Limnoria 2024.08.15</div>
<div class="a m nw" style="left:68px;top:684.3px;font-size:14px;line-height:14px;color:#e2e2e2;">\_o&lt; quack!</div>
<svg class="a" style="left:69px;top:712px" width="12" height="8" viewBox="0 0 12 8"><path d="M11.5 2 H3 M11.5 6 H3 M4.5 0.5 L1 4 L4.5 7.5" fill="none" stroke="#8a8a8a" stroke-width="1"/></svg>
<div class="a m nw" style="left:90px;top:709.3px;font-size:14px;line-height:14px;color:#cfcfcf;">decentlyannoyed</div>
<div class="a m nw" style="left:224.88px;top:709.3px;font-size:14px;line-height:14px;color:#8c8c8c;">quit (~decentlya@user/decentlyannoyed) Quit: Client closed</div>
<div class="a" style="left:25px;top:737px;width:32px;height:32px;border-radius:16px;background:#b0a600"></div>
<div class="a" style="left:25px;top:735px;width:32px;height:32px;border-radius:16px;background:#f4e800;color:#000;font-size:19px;line-height:34px;text-align:center;-webkit-text-stroke:0.3px #000">M</div>
<div class="a m nw" style="left:68px;top:735.3px;font-size:14px;line-height:14px;color:#fafafa;font-weight:bold;">Mysteria</div>
<div class="a m nw" style="left:147.44px;top:735.3px;font-size:14px;line-height:14px;color:#8c8c8c;">Women can't code</div>
<div class="a m nw" style="left:68px;top:756.3px;font-size:14px;line-height:14px;color:#e2e2e2;">+bang</div>
<div class="a" style="left:25px;top:786px;width:32px;height:32px;border-radius:16px;background:#3d9a7a"></div>
<div class="a" style="left:25px;top:784px;width:32px;height:32px;border-radius:16px;background:#62c9a6;color:#000;font-size:19px;line-height:34px;text-align:center;-webkit-text-stroke:0.3px #000">C</div>
<div class="a" style="left:70px;top:787px;width:5px;height:5px;border-radius:3px;background:#d02020"></div>
<div class="a m nw" style="left:80px;top:784.3px;font-size:14px;line-height:14px;color:#fafafa;font-weight:bold;">chat</div>
<div class="a m nw" style="left:125.72px;top:784.3px;font-size:14px;line-height:14px;color:#8c8c8c;">Limnoria 2024.08.15</div>
<div class="a m nw" style="left:68px;top:805.3px;font-size:14px;line-height:14px;color:#e2e2e2;">\_x&lt; | Score: 1 (6.97 seconds)</div>
<div class="a m nw" style="left:68px;top:828.3px;font-size:14px;line-height:14px;color:#e2e2e2;">The hunt stops now!</div>
<div class="a m nw" style="left:68px;top:851.3px;font-size:14px;line-height:14px;color:#c0c0c0;">Scores: (mane: 2) (MetaNova: 1) (decentlyannoyed: 1) (Mysteria: 1)</div>
<div class="a m nw" style="left:68px;top:874.3px;font-size:14px;line-height:14px;color:#e2e2e2;">Best time: MetaNova with 4.88 seconds</div>
<div class="a m nw" style="left:68px;top:897.3px;font-size:14px;line-height:14px;color:#e2e2e2;">Longest time: decentlyannoyed with 56.18 seconds (this is your new longest time in this channel! Your</div>
<div class="a" style="left:69px;top:922px;width:11px;height:11px;border:1px solid #888;border-radius:1px"><div style="position:absolute;left:4px;top:1px;width:1px;height:7px;background:#888"></div><div style="position:absolute;left:1px;top:4px;width:7px;height:1px;background:#888"></div></div>
<svg class="a" style="left:85px;top:925px" width="12" height="8" viewBox="0 0 12 8"><path d="M0.5 4 H11.5 M3.5 1 L0.7 4 L3.5 7 M8.5 1 L11.3 4 L8.5 7" fill="none" stroke="#8a8a8a" stroke-width="1"/></svg>
<div class="a m nw" style="left:106px;top:922.3px;font-size:14px;line-height:14px;color:#cfcfcf;">FloridaMan</div>
<div class="a m nw" style="left:198.73000000000002px;top:922.3px;font-size:14px;line-height:14px;color:#8c8c8c;">nipped out</div>
<div class="a" style="left:25px;top:951px;width:32px;height:32px;border-radius:16px;background:#2e8a4c"></div>
<div class="a" style="left:25px;top:949px;width:32px;height:32px;border-radius:16px;background:#48c270;color:#000;font-size:19px;line-height:34px;text-align:center;-webkit-text-stroke:0.3px #000">T</div>
<div class="a m nw" style="left:68px;top:949.3px;font-size:14px;line-height:14px;color:#fafafa;font-weight:bold;">tinwhiskers</div>
<div class="a m nw" style="left:172.73px;top:949.3px;font-size:14px;line-height:14px;color:#8c8c8c;"></div>
<div class="a m nw" style="left:68px;top:970.3px;font-size:14px;line-height:14px;color:#e2e2e2;">Hide your cheese</div>
<svg class="a" style="left:69px;top:998px" width="12" height="8" viewBox="0 0 12 8"><path d="M11.5 2 H3 M11.5 6 H3 M4.5 0.5 L1 4 L4.5 7.5" fill="none" stroke="#8a8a8a" stroke-width="1"/></svg>
<div class="a m nw" style="left:90px;top:995.3px;font-size:14px;line-height:14px;color:#cfcfcf;">KindOne</div>
<div class="a m nw" style="left:157.44px;top:995.3px;font-size:14px;line-height:14px;color:#8c8c8c;">quit (kindone@user/meow/KindOne) Read error: Connection reset by peer</div>
<div class="a" style="left:25px;top:1022px;width:1530px;height:34px;background:#444;border-radius:2px"></div>
<div class="a" style="left:30px;top:1027px;width:24px;height:24px"><svg width="24" height="24" viewBox="0 0 32 32"><rect width="32" height="32" rx="2" fill="#5a0000"/><circle cx="16" cy="16" r="14.6" fill="#3e0000" stroke="#0a0000" stroke-width="1.3"/><g fill="#a80404"><ellipse cx="6.3" cy="10.3" rx="3.6" ry="2.5"/><ellipse cx="25.7" cy="10.3" rx="3.6" ry="2.5"/><ellipse cx="6.6" cy="15.8" rx="3.3" ry="2.5"/><ellipse cx="25.4" cy="15.8" rx="3.3" ry="2.5"/><ellipse cx="8.3" cy="22" rx="3" ry="2.6"/><ellipse cx="23.7" cy="22" rx="3" ry="2.6"/><circle cx="11.6" cy="13.4" r="1.8"/><circle cx="20.4" cy="13.4" r="1.8"/><circle cx="12.5" cy="18.6" r="2.2"/><circle cx="19.5" cy="18.6" r="2.2"/></g><path d="M16 13 V26 M16 13 L12 7 M16 13 L20 7" stroke="#0a0000" stroke-width="1.2" fill="none"/></svg></div>
<div class="a m nw" style="left:61px;top:1032.3px;font-size:14px;line-height:14px;color:#f4f4f4;font-weight:bold;">mane</div>
<div class="a m nw" style="left:1494px;top:200.8px;font-size:12px;line-height:12px;color:#9a9a9a;">00:00:15</div>
<div class="a m nw" style="left:1494px;top:225.8px;font-size:12px;line-height:12px;color:#9a9a9a;">00:00:29</div>
<div class="a m nw" style="left:1494px;top:273.8px;font-size:12px;line-height:12px;color:#9a9a9a;">00:00:41</div>
<div class="a m nw" style="left:1494px;top:298.8px;font-size:12px;line-height:12px;color:#9a9a9a;">00:00:52</div>
<div id="hdr" class="a">
 <div class="a m nw" style="left:27px;top:15px;font-size:16px;line-height:18px;color:#f2f2f2"><span style="letter-spacing:-0.35px">##chat </span><span style="font-size:14px;color:#e8e8e8">Welcome to ##chat, a social and offtopic channel for sensible conversations. Mind the language. | THIS IS A POLITICS-FREE ZONE! You have been warned. | Rules: https://pastebin.com/</span></div>
 <div class="a m nw" style="left:26px;top:33px;font-size:14px;line-height:18px;color:#e8e8e8">raw/ntTcx2xb | We reserve the right to remove annoying people | Free Speech: https://xkcd.com/1357/ | Operators can be found in ##chat-ops</div>
 <svg class="a" style="left:1642px;top:19px" width="14" height="11" viewBox="0 0 14 11"><g fill="#ccc"><rect x="0" y="0" width="2.5" height="2.3"/><rect x="0" y="4.3" width="2.5" height="2.3"/><rect x="0" y="8.6" width="2.5" height="2.3"/><rect x="3.8" y="0" width="10" height="2.3"/><rect x="3.8" y="4.3" width="10" height="2.3"/><rect x="3.8" y="8.6" width="10" height="2.3"/></g></svg>
 <div class="a nw m" style="left:1660px;top:18px;font-size:13px;line-height:15px;color:#ccc">546</div>
 <svg class="a" style="left:1693px;top:16.5px" width="16" height="16" viewBox="0 0 24 24"><g fill="#d2d2d2"><circle cx="12" cy="12" r="8.6"/><rect x="10.2" y="0.3" width="3.6" height="5" rx="0.8" transform="rotate(0 12 12)"/><rect x="10.2" y="0.3" width="3.6" height="5" rx="0.8" transform="rotate(45 12 12)"/><rect x="10.2" y="0.3" width="3.6" height="5" rx="0.8" transform="rotate(90 12 12)"/><rect x="10.2" y="0.3" width="3.6" height="5" rx="0.8" transform="rotate(135 12 12)"/><rect x="10.2" y="0.3" width="3.6" height="5" rx="0.8" transform="rotate(180 12 12)"/><rect x="10.2" y="0.3" width="3.6" height="5" rx="0.8" transform="rotate(225 12 12)"/><rect x="10.2" y="0.3" width="3.6" height="5" rx="0.8" transform="rotate(270 12 12)"/><rect x="10.2" y="0.3" width="3.6" height="5" rx="0.8" transform="rotate(315 12 12)"/></g><circle cx="12" cy="12" r="3.6" fill="#262626"/></svg>
</div>
<div id="unread" class="a" style="border-radius:0 0 3px 0">
 <div class="a m nw" style="left:6px;top:7px;font-size:13px;line-height:15px;color:#d4d4d4">↑ about 14 hours of unread messages</div>
 <div class="a m nw" style="left:1411px;top:2px;width:151px;height:20px;background:#777;border-radius:3px;font-size:13px;line-height:20px;color:#f0f0f0;text-align:center">Mark as read (Esc)</div>
</div>
<div id="vsep" class="a"></div>
<div id="members" class="a" style="overflow:hidden">
 <div class="a m nw" style="left:10px;top:-9px;font-size:14px;line-height:19.8px;color:#dcdcdc">avery<br>avg_nixos_user<br><span style="color:#9a9a9a">avinag</span><br>azizLIGHT[m]<br>B-|<br><span style="color:#9a9a9a">b0o</span><br>b3bop<br>b4ckup</div>
</div>
<div id="side" class="a">
 <div class="a" style="left:10px;top:11px;width:181px;height:97px;background:#eef3f8;border-radius:4px;overflow:hidden">
  <div class="a" style="left:0;top:0;width:181px;height:31px;background:#ff2020"></div>
  <div class="a nw" style="left:10px;top:6px;font-size:17px;line-height:20px;color:#fff">Limited trial</div>
  <div class="a" style="left:6px;top:38px;width:50px;height:50px;border-radius:25px;background:#d40000;color:#fff;font-size:13px;line-height:50px;text-align:center">€5.75</div>
  <div class="a nw" style="left:64px;top:37px;font-size:14px;line-height:18px;color:#2a7be8">Upgrade now to<br>stay connected<br>permanently</div>
 </div>
 <div class="a" style="left:-2px;top:129px;width:193px;height:33px;background:#333;border-radius:0 5px 5px 0"></div>
 <div class="a" style="left:-2px;top:129px;width:5px;height:33px;background:#2b6ff2"></div>
 <svg class="a" style="left:10px;top:139px" width="11" height="13" viewBox="0 0 11 13"><path d="M0.5 0.5 H10.5 V6 C10.5 9 8.5 11 5.5 12.5 C2.5 11 0.5 9 0.5 6 Z" fill="#f0f0f0"/><path d="M6 2.5 H8.5 V6.5 C8.5 8 7.5 9.3 6 10 Z" fill="#333"/></svg>
 <div class="a nw" style="left:27px;top:137px;font-size:14px;line-height:18px;font-weight:bold;color:#f4f4f4;letter-spacing:-0.3px">Libera.Chat</div>
 <div class="a nw" style="left:27px;top:167px;font-size:15px;line-height:18px;color:#dcdcdc;letter-spacing:-0.4px">##art</div>
 <div class="a" style="left:45px;top:188px;width:146px;height:24px;background:#fff;border-radius:4px"></div>
 <div class="a nw" style="left:-232px;top:190px;width:300px;text-align:right;font-size:15px;line-height:18px;color:#555">##chat</div>
</div>

<div class="a nw" style="left:1495px;top:331.4px;width:300px;text-align:right;font-size:15px;line-height:18px;color:#dcdcdc;">e</div>
<div class="a nw" style="left:1552px;top:355.9px;width:300px;text-align:right;font-size:15px;line-height:18px;color:#dcdcdc;">an-offtopic</div>
<div class="a nw" style="left:1516px;top:380.4px;width:300px;text-align:right;font-size:15px;line-height:18px;color:#dcdcdc;">an-pl</div>
<div class="a nw" style="left:1532px;top:404.9px;width:300px;text-align:right;font-size:15px;line-height:18px;color:#dcdcdc;">alocean</div>
<div class="a nw" style="left:1497px;top:429.4px;width:300px;text-align:right;font-size:15px;line-height:18px;color:#dcdcdc;">al</div>
<div class="a nw" style="left:1495px;top:453.9px;width:300px;text-align:right;font-size:15px;line-height:18px;color:#dcdcdc;">x</div>
<div class="a nw" style="left:1505px;top:478.4px;width:300px;text-align:right;font-size:15px;line-height:18px;color:#f4f4f4;font-weight:bold;">osd</div>
<div class="a nw" style="left:1544px;top:502.9px;width:300px;text-align:right;font-size:15px;line-height:18px;color:#dcdcdc;">osd-social</div>
<div class="a nw" style="left:1506px;top:551.9px;width:300px;text-align:right;font-size:15px;line-height:18px;color:#f4f4f4;font-weight:bold;">ub</div>
<div class="a nw" style="left:1518px;top:576.4px;width:300px;text-align:right;font-size:15px;line-height:18px;color:#f4f4f4;font-weight:bold;">ware</div>
<div class="a nw" style="left:1557px;top:600.9px;width:300px;text-align:right;font-size:15px;line-height:18px;color:#dcdcdc;">ware-social</div>
<div class="a nw" style="left:1512px;top:625.4px;width:300px;text-align:right;font-size:15px;line-height:18px;color:#dcdcdc;">ape</div>
<div class="a nw" style="left:1519px;top:649.9px;width:300px;text-align:right;font-size:15px;line-height:18px;color:#f4f4f4;font-weight:bold;">script</div>
<div class="a nw" style="left:1519px;top:698.9px;width:300px;text-align:right;font-size:15px;line-height:18px;color:#dcdcdc;">office</div>
<div class="a nw" style="left:1514px;top:723.4px;width:300px;text-align:right;font-size:15px;line-height:18px;color:#dcdcdc;">ture</div>
<div class="a nw" style="left:1509px;top:747.9px;width:300px;text-align:right;font-size:15px;line-height:18px;color:#f4f4f4;font-weight:bold;">OSX</div>
<div class="a nw" style="left:1516px;top:772.4px;width:300px;text-align:right;font-size:15px;line-height:18px;color:#dcdcdc;">ports</div>
<div class="a nw" style="left:1522px;top:796.9px;width:300px;text-align:right;font-size:15px;line-height:18px;color:#dcdcdc;">dicine</div>
<div class="a nw" style="left:1508px;top:821.4px;width:300px;text-align:right;font-size:15px;line-height:18px;color:#dcdcdc;">ble</div>
<div class="a nw" style="left:1530px;top:845.9px;width:300px;text-align:right;font-size:15px;line-height:18px;color:#f4f4f4;font-weight:bold;">orking</div>
<div class="a nw" style="left:1502px;top:870.4px;width:300px;text-align:right;font-size:15px;line-height:18px;color:#dcdcdc;">.js</div>
<div class="a nw" style="left:1512px;top:894.9px;width:300px;text-align:right;font-size:15px;line-height:18px;color:#dcdcdc;">vpn</div>
<div class="a nw" style="left:1511px;top:919.4px;width:300px;text-align:right;font-size:15px;line-height:18px;color:#dcdcdc;">wire</div>
<div class="a nw" style="left:1498px;top:943.9px;width:300px;text-align:right;font-size:15px;line-height:18px;color:#dcdcdc;">ry</div>
<div class="a nw" style="left:1507px;top:968.4px;width:300px;text-align:right;font-size:15px;line-height:18px;color:#dcdcdc;">and</div>
<div class="a nw" style="left:1511.5px;top:992.9px;width:300px;text-align:right;font-size:15px;line-height:18px;color:#f4f4f4;font-weight:bold;">itics</div>
<div class="a nw" style="left:1493px;top:1017.4px;width:300px;text-align:right;font-size:15px;line-height:18px;color:#dcdcdc;">y</div>
<div class="a" style="left:1722px;top:1028px;width:198px;height:13px;background:#ff1f1f"></div>
<div class="a" style="left:1722px;top:1041px;width:198px;height:39px;background:#262626"></div>
<div class="a nw" style="left:1572px;top:1050.4px;width:300px;text-align:right;font-size:15px;line-height:18px;color:#eaeaea">Network settings &amp; info</div>
<svg class="a" style="left:1896px;top:1052px" width="15" height="15" viewBox="0 0 24 24"><path fill="#555" d="M19.4 13c.04-.33.06-.66.06-1s-.02-.67-.06-1l2.1-1.65c.2-.15.24-.42.12-.64l-2-3.46c-.12-.22-.39-.3-.61-.22l-2.49 1c-.52-.4-1.08-.73-1.69-.98l-.38-2.65C14.46 2.18 14.25 2 14 2h-4c-.25 0-.46.18-.49.42l-.38 2.65c-.61.25-1.17.59-1.69.98l-2.49-1c-.23-.09-.49 0-.61.22l-2 3.46c-.13.22-.07.49.12.64L4.57 11c-.04.33-.07.67-.07 1s.03.67.07 1l-2.1 1.65c-.2.15-.25.42-.12.64l2 3.46c.12.22.39.3.61.22l2.49-1c.52.4 1.08.73 1.69.98l.38 2.65c.03.24.24.42.49.42h4c.25 0 .46-.18.49-.42l.38-2.65c.61-.25 1.17-.59 1.69-.98l2.49 1c.23.09.49 0 .61-.22l2-3.46c.12-.22.07-.49-.12-.64L19.4 13zM12 15.5c-1.93 0-3.5-1.57-3.5-3.5s1.57-3.5 3.5-3.5 3.5 1.57 3.5 3.5-1.57 3.5-3.5 3.5z"/></svg>
<div id="mum" class="a">
<div class="a" style="left:0px;top:0px;width:859px;height:36px;background:#2a2a2a"></div>
<div class="a" style="left:0px;top:35px;width:859px;height:2px;background:#1b1b1b"></div>
<div class="a nw" style="left:370px;top:9.0px;font-size:15px;line-height:18px;color:#b4b4b4;">Mumble -- 1.4.287</div>
<svg class="a" style="left:837px;top:14px" width="10" height="9" viewBox="0 0 10 9"><path d="M1 0.5 L9 8.5 M9 0.5 L1 8.5" stroke="#f4f4f4" stroke-width="2"/></svg>
<div class="a nw" style="left:18px;top:42.3px;font-size:13px;line-height:16px;color:#dedede;text-underline-offset:2px"><u>S</u>erwer</div>
<div class="a nw" style="left:89px;top:42.3px;font-size:13px;line-height:16px;color:#dedede;text-underline-offset:2px"><u>W</u>łasne</div>
<div class="a nw" style="left:163px;top:42.3px;font-size:13px;line-height:16px;color:#dedede;text-underline-offset:2px"><u>O</u>pcje</div>
<div class="a nw" style="left:227px;top:42.3px;font-size:13px;line-height:16px;color:#dedede;text-underline-offset:2px"><u>P</u>omoc</div>
<div class="a" style="left:72px;top:67px;width:1px;height:25px;background:#444"></div>
<div class="a" style="left:180px;top:67px;width:1px;height:25px;background:#444"></div>
<div class="a" style="left:222px;top:67px;width:1px;height:25px;background:#444"></div>
<div class="a" style="left:264px;top:67px;width:1px;height:25px;background:#444"></div>
<div class="a" style="left:306px;top:67px;width:1px;height:25px;background:#444"></div>
<svg class="a" style="left:7px;top:68px" width="22" height="22" viewBox="0 0 22 22"><defs><clipPath id="gc"><circle cx="11.25" cy="11" r="10.5"/></clipPath></defs><circle cx="11.25" cy="11" r="10.5" fill="#4a80d6"/><g clip-path="url(#gc)" fill="#22f088"><path d="M2.1 4.3 L5.2 2.3 L10.5 2.1 L10.8 2.8 L9.1 4.5 L8.6 5.7 L10 7.2 L9.6 8.8 L7.6 9.8 L5.7 11.5 L5 13.4 L3.5 12.4 L1.4 10.5 L0 8 Z"/><path d="M14.6 2.1 L16.3 1.6 L18.9 5 L18.2 6.2 L16.8 6.9 L15.3 5.2 Z"/><path d="M20.4 7.2 L21.5 10 L20.6 14.4 L18.7 17.3 L17.7 16.3 L18.7 12.4 L19.7 8.8 Z"/><path d="M5 13.6 L7.6 15.3 L11.5 17.7 L12.9 19.7 L11.5 21.5 L7.6 21 L5.7 19.2 L5.2 16.3 Z"/></g></svg>
<svg class="a" style="left:46px;top:67px" width="10" height="24" viewBox="0 0 10 24"><circle cx="5" cy="5" r="3.9" fill="#f8c000"/><path d="M0.5 10.8 H6.5 C8.2 10.8 9.3 11.9 9.3 13.5 V22 C9.3 22.8 8.8 23.3 8 23.3 H3 C2.2 23.3 1.7 22.8 1.7 22 V14 Z" fill="#f8c000"/></svg>
<svg class="a" style="left:86px;top:67px" width="14" height="24" viewBox="0 0 14 24"><rect x="3" y="0.8" width="8" height="16.5" rx="4" fill="#2e9e4e"/><path d="M1 13 C1 16.5 3.5 19 7 19 C10.5 19 13 16.5 13 13" fill="none" stroke="#2e9e4e" stroke-width="1.2"/><rect x="6.4" y="19" width="1.2" height="3" fill="#2e9e4e"/><rect x="1" y="21.8" width="12" height="1.4" fill="#2e9e4e"/></svg>
<svg class="a" style="left:116px;top:69px" width="23" height="20" viewBox="0 0 23 20"><rect x="0.8" y="4.5" width="3" height="10.5" rx="0.8" fill="#2e9e4e"/><path d="M4.8 4.5 L14.3 0.5 V19.3 L4.8 15 Z" fill="#2e9e4e"/><path d="M16.3 6 C17.5 8 17.5 11.5 16.3 13.5" fill="none" stroke="#2e9e4e" stroke-width="1.2"/><path d="M18.5 3.5 C20.8 7 20.8 12.5 18.5 16" fill="none" stroke="#2e9e4e" stroke-width="1.2"/></svg>
<svg class="a" style="left:150px;top:70px" width="18" height="18" viewBox="0 0 18 18"><circle cx="9" cy="9" r="8" fill="none" stroke="#e0402e" stroke-width="1.6"/><circle cx="9" cy="9" r="5.5" fill="#e0402e"/></svg>
<svg class="a" style="left:191px;top:71px" width="21" height="20" viewBox="0 0 21 20"><path d="M1.5 0 H18.5 C19.5 0 20 0.5 20 1.5 V14 C20 15 19.5 15.5 18.5 15.5 H9.5 L4.2 19.5 L3.8 15.5 H1.5 C0.5 15.5 0 15 0 14 V1.5 C0 0.5 0.5 0 1.5 0 Z" fill="#9558b0"/></svg>
<svg class="a" style="left:231px;top:67px" width="24" height="24" viewBox="0 0 24 24"><g fill="#42a5f5"><circle cx="12" cy="12" r="8.6"/><rect x="9.8" y="0" width="4.4" height="6" rx="1.2" transform="rotate(0 12 12)"/><rect x="9.8" y="0" width="4.4" height="6" rx="1.2" transform="rotate(45 12 12)"/><rect x="9.8" y="0" width="4.4" height="6" rx="1.2" transform="rotate(90 12 12)"/><rect x="9.8" y="0" width="4.4" height="6" rx="1.2" transform="rotate(135 12 12)"/><rect x="9.8" y="0" width="4.4" height="6" rx="1.2" transform="rotate(180 12 12)"/><rect x="9.8" y="0" width="4.4" height="6" rx="1.2" transform="rotate(225 12 12)"/><rect x="9.8" y="0" width="4.4" height="6" rx="1.2" transform="rotate(270 12 12)"/><rect x="9.8" y="0" width="4.4" height="6" rx="1.2" transform="rotate(315 12 12)"/></g><circle cx="12" cy="12" r="3.1" fill="#2b2b2b"/></svg>
<svg class="a" style="left:274px;top:68px" width="23" height="23" viewBox="0 0 23 23"><path d="M0 2.2 C7 -0.3 15 -0.3 22 2.2 L14.8 12 V22.8 L9.5 21 V12 Z" fill="#2e9e4e"/></svg>
<svg class="a" style="left:316px;top:67px" width="24" height="24" viewBox="0 0 24 24"><circle cx="8.6" cy="8.4" r="6.6" fill="none" stroke="#2e9e4e" stroke-width="3.6"/><path d="M13.5 13.5 L21.8 21.5" stroke="#2e9e4e" stroke-width="3.8" stroke-linecap="square"/></svg>
<div class="a" style="left:2px;top:98px;width:251px;height:634px;background:#1b1b1b;border-radius:4px 3px 0 0"></div>
<div class="a" style="left:6px;top:104.5px;width:227px;height:2px;background:repeating-linear-gradient(90deg,#777 0 1.5px,transparent 1.5px 3px)"></div>
<div class="a" style="left:6px;top:721.5px;width:227px;height:2px;background:repeating-linear-gradient(90deg,#777 0 1.5px,transparent 1.5px 3px)"></div>
<div class="a" style="left:6px;top:105px;width:2px;height:618px;background:repeating-linear-gradient(180deg,#777 0 1.5px,transparent 1.5px 3px)"></div>
<div class="a" style="left:231.5px;top:105px;width:2px;height:618px;background:repeating-linear-gradient(180deg,#777 0 1.5px,transparent 1.5px 3px)"></div>
<div class="a" style="left:238px;top:98px;width:15px;height:633px;background:#333;border-radius:0 3px 0 0"></div>
<div class="a" style="left:239px;top:650px;width:13px;height:80px;background:#6c6c6c;border-radius:3px"></div>
<div class="a" style="left:3px;top:731px;width:234px;height:15px;background:#2c2c2c;border-radius:0 0 0 3px"></div>
<div class="a" style="left:3px;top:732px;width:151px;height:13px;background:#6c6c6c;border-radius:3px"></div>
<div class="a" style="left:237px;top:731px;width:16px;height:15px;background:#1b1b1b;border-radius:0 0 3px 0"></div>
<div class="a" style="left:3px;top:752px;width:250px;height:20px;background:#1b1b1b;border-radius:3px"></div>
<div class="a nw" style="left:38px;top:755.7px;font-size:13px;line-height:16px;color:#cdcdcd;letter-spacing:-0.075px;font-style:italic">Wiadomość do kanału '#Public'</div>
<div class="a nw" style="left:10.5px;top:108.7px;font-size:13px;line-height:16px;color:#ececec;"><span style="color:#a3b3b3;letter-spacing:-0.45px">[23:57:25]</span> Wiadomość powitalna:</div>
<div class="a nw" style="left:50px;top:152.3px;font-size:13px;line-height:16px;color:#e6e6e6;letter-spacing:-0.324px;">Rules are: You MUST READ</div>
<div class="a" style="left:42px;top:157.60000000000002px;width:5px;height:5px;background:#e0e0e0;border-radius:3px"></div>
<div class="a nw" style="left:50px;top:168.3px;font-size:13px;line-height:16px;color:#e6e6e6;letter-spacing:-0.273px;">THE RULES (Yes reading the</div>
<div class="a nw" style="left:50px;top:184.3px;font-size:13px;line-height:16px;color:#e6e6e6;letter-spacing:-0.052px;">rules is a rule), Do not be</div>
<div class="a nw" style="left:50px;top:200.3px;font-size:13px;line-height:16px;color:#e6e6e6;letter-spacing:-0.026px;">annoying, discriminate against,</div>
<div class="a nw" style="left:50px;top:216.3px;font-size:13px;line-height:16px;color:#e6e6e6;letter-spacing:-0.026px;">attack, insult, shame, bully,</div>
<div class="a nw" style="left:50px;top:232.3px;font-size:13px;line-height:16px;color:#e6e6e6;letter-spacing:-0.026px;">talk over or belittle others.</div>
<div class="a nw" style="left:50px;top:248.3px;font-size:13px;line-height:16px;color:#e6e6e6;letter-spacing:-0.188px;">Anger and Hate are NOT</div>
<div class="a nw" style="left:50px;top:264.3px;font-size:13px;line-height:16px;color:#e6e6e6;letter-spacing:-0.026px;">tolerated.</div>
<div class="a nw" style="left:50px;top:280.3px;font-size:13px;line-height:16px;color:#e6e6e6;letter-spacing:-0.056px;">No begging for or asking</div>
<div class="a nw" style="left:50px;top:296.3px;font-size:13px;line-height:16px;color:#e6e6e6;letter-spacing:-0.064px;">money (Panhandling)</div>
<div class="a nw" style="left:64px;top:312.3px;font-size:13px;line-height:16px;color:#e6e6e6;letter-spacing:-0.058px;">Amendment to the rules</div>
<div class="a nw" style="left:50px;top:328.3px;font-size:13px;line-height:16px;color:#e6e6e6;letter-spacing:-0.026px;">thanks to</div>
<div class="a nw" style="left:50px;top:344.3px;font-size:13px;line-height:16px;color:#e6e6e6;letter-spacing:-0.224px;">TheRealTrumpDeDump</div>
<div class="a nw" style="left:50px;top:360.3px;font-size:13px;line-height:16px;color:#e6e6e6;letter-spacing:-0.158px;">(AKA:river) No "Mom" jokes.</div>
<div class="a nw" style="left:50px;top:376.3px;font-size:13px;line-height:16px;color:#e6e6e6;letter-spacing:-0.051px;">This server is accessble from</div>
<div class="a" style="left:42px;top:381.6px;width:5px;height:5px;background:#e0e0e0;border-radius:3px"></div>
<div class="a nw" style="left:50px;top:392.3px;font-size:13px;line-height:16px;color:#e6e6e6;letter-spacing:-0.055px;">your Android based phone.</div>
<div class="a nw" style="left:50px;top:408.3px;font-size:13px;line-height:16px;color:#e6e6e6;letter-spacing:-0.115px;">Search the App Store for</div>
<div class="a nw" style="left:50px;top:424.3px;font-size:13px;line-height:16px;color:#e6e6e6;letter-spacing:-0.115px;">"<span style="color:#3a9ee0">Mumla</span>".</div>
<div class="a nw" style="left:50px;top:440.3px;font-size:13px;line-height:16px;color:#e6e6e6;letter-spacing:-0.053px;">No violating international</div>
<div class="a" style="left:42px;top:445.6px;width:5px;height:5px;background:#e0e0e0;border-radius:3px"></div>
<div class="a nw" style="left:50px;top:456.3px;font-size:13px;line-height:16px;color:#e6e6e6;letter-spacing:-0.026px;">banking sanctions.</div>
<div class="a nw" style="left:50px;top:500.3px;font-size:13px;line-height:16px;color:#e6e6e6;letter-spacing:-0.097px;">Commands..</div>
<div class="a nw" style="left:50px;top:528.1px;font-size:13px;line-height:16px;color:#e6e6e6;letter-spacing:-0.026px;">!seen</div>
<div class="a" style="left:42px;top:533.4px;width:5px;height:5px;background:#e0e0e0;border-radius:3px"></div>
<div class="a nw" style="left:50px;top:544.1px;font-size:13px;line-height:16px;color:#e6e6e6;letter-spacing:-0.051px;">!set - Sets a status by your</div>
<div class="a" style="left:42px;top:549.4px;width:5px;height:5px;background:#e0e0e0;border-radius:3px"></div>
<div class="a nw" style="left:50px;top:560.1px;font-size:13px;line-height:16px;color:#e6e6e6;letter-spacing:-0.026px;">nickname</div>
<div class="a nw" style="left:50px;top:576.1px;font-size:13px;line-height:16px;color:#e6e6e6;letter-spacing:-0.026px;">!unset - removes your status</div>
<div class="a" style="left:42px;top:581.4px;width:5px;height:5px;background:#e0e0e0;border-radius:3px"></div>
<div class="a nw" style="left:50px;top:592.1px;font-size:13px;line-height:16px;color:#e6e6e6;letter-spacing:-0.026px;">by your nickname</div>
<div class="a nw" style="left:50px;top:624.0px;font-size:13px;line-height:16px;color:#e6e6e6;letter-spacing:-0.060px;">Check out this map of</div>
<div class="a nw" style="left:50px;top:640.0px;font-size:13px;line-height:16px;color:#e6e6e6;letter-spacing:-0.083px;">Mumbler Servers: <span style="color:#3a9ee0">https://</span></div>
<div class="a nw" style="left:50px;top:656.0px;font-size:13px;line-height:16px;color:#e6e6e6;letter-spacing:-0.026px;"><span style="color:#3a9ee0">extremelycorporate.ca/</span></div>
<div class="a nw" style="left:50px;top:672.0px;font-size:13px;line-height:16px;color:#e6e6e6;letter-spacing:-0.026px;"><span style="color:#3a9ee0">doodles/mumble_map/</span></div>
<div class="a" style="left:262px;top:98px;width:597px;height:677px;background:#1b1b1b;border-radius:3px 0 0 0"></div>
<div class="a" style="left:263px;top:99px;width:594px;height:19px;background:#1a381a"></div>
<div class="a" style="left:283px;top:479px;width:574px;height:19px;background:#3e4e5e;border-radius:2px"></div>
<div class="a nw" style="left:271.5999999999999px;top:100.7px;font-size:13px;line-height:16px;color:#e4e4e4;letter-spacing:-0.253px;">[DM] The Place Of Dangerous Minds! (ENGLISH)</div>
<svg class="a" style="left:826px;top:103px" width="12" height="11" viewBox="0 0 12 11"><path d="M0.5 0.5 H11.5 V8 H4 L2 10.5 V8 H0.5 Z" fill="#6a6a6a"/></svg>
<svg class="a" style="left:841.5px;top:100px" width="13" height="14" viewBox="0 0 13 14"><path d="M3 6 V3.3 C3 1.5 4.3 0.5 6 0.5 C7.7 0.5 9 1.5 9 3.3 V4" fill="none" stroke="#2fb04f" stroke-width="1.6"/><rect x="1" y="6.3" width="11" height="7" rx="1" fill="none" stroke="#2fb04f" stroke-width="1.6"/><rect x="5.7" y="8.3" width="1.6" height="3" fill="#2fb04f"/></svg>
<div class="a nw" style="left:291px;top:119.7px;font-size:13px;line-height:16px;color:#e4e4e4;letter-spacing:-0.128px;">#Admins</div>
<svg class="a" style="left:841.5px;top:119px" width="13" height="14" viewBox="0 0 13 14"><path d="M3 6 V3.8 C3 2 4.3 1 6 1 C7.7 1 9 2 9 3.8 V6" fill="none" stroke="#e04535" stroke-width="1.6"/><rect x="1" y="6.3" width="11" height="7" rx="1" fill="none" stroke="#e04535" stroke-width="1.6"/><rect x="5.7" y="8.3" width="1.6" height="3" fill="#e04535"/></svg>
<svg class="a" style="left:289px;top:142px" width="14" height="13" viewBox="0 0 14 13"><path d="M6 3.5 L8 1.6 C9.2 0.5 11 0.5 12.2 1.6 C13.3 2.8 13.3 4.6 12.2 5.8 L10 8 M8 9.5 L6 11.4 C4.8 12.5 3 12.5 1.8 11.4 C0.7 10.2 0.7 8.4 1.8 7.2 L4 5 M5 8.5 L9 4.5" fill="none" stroke="#3a9ae8" stroke-width="1.7" stroke-linecap="round"/></svg>
<div class="a nw" style="left:307px;top:138.7px;font-size:13px;line-height:16px;color:#e4e4e4;letter-spacing:-0.145px;font-style:italic">#MembersOnly</div>
<svg class="a" style="left:826px;top:141px" width="12" height="11" viewBox="0 0 12 11"><path d="M0.5 0.5 H11.5 V8 H4 L2 10.5 V8 H0.5 Z" fill="#6a6a6a"/></svg>
<svg class="a" style="left:841.5px;top:138px" width="13" height="14" viewBox="0 0 13 14"><path d="M3 6 V3.8 C3 2 4.3 1 6 1 C7.7 1 9 2 9 3.8 V6" fill="none" stroke="#e04535" stroke-width="1.6"/><rect x="1" y="6.3" width="11" height="7" rx="1" fill="none" stroke="#e04535" stroke-width="1.6"/><rect x="5.7" y="8.3" width="1.6" height="3" fill="#e04535"/></svg>
<svg class="a" style="left:270px;top:163px" width="8" height="8" viewBox="0 0 8 8"><path d="M8 0 V8 H0 Z" fill="#8a8a8a"/></svg>
<div class="a nw" style="left:291px;top:157.7px;font-size:13px;line-height:16px;color:#f0f0f0;letter-spacing:-0.128px;font-style:italic;font-weight:bold">#Public</div>
<svg class="a" style="left:842px;top:160px" width="12" height="11" viewBox="0 0 12 11"><path d="M0.5 0.5 H11.5 V8 H4 L2 10.5 V8 H0.5 Z" fill="#6a6a6a"/></svg>
<svg class="a" style="left:309px;top:177px" width="13" height="15" viewBox="0 0 13 15"><circle cx="6.1" cy="4.2" r="3.3" fill="#2d8a47"/><ellipse cx="6.1" cy="10.4" rx="6" ry="4.3" fill="#2d8a47"/></svg>
<div class="a nw" style="left:327px;top:176.7px;font-size:13px;line-height:16px;color:#e4e4e4;letter-spacing:-0.026px;"><b>mane</b></div>
<svg class="a" style="left:826px;top:179px" width="12" height="11" viewBox="0 0 12 11"><path d="M0.5 0.5 H11.5 V8 H4 L2 10.5 V8 H0.5 Z" fill="#6a6a6a"/></svg>
<svg class="a" style="left:842px;top:181px" width="12" height="8" viewBox="0 0 12 8"><path d="M0.8 4.5 L4 7 L11.2 1" fill="none" stroke="#e0a020" stroke-width="1.6"/></svg>
<svg class="a" style="left:309px;top:196px" width="13" height="15" viewBox="0 0 13 15"><circle cx="6.1" cy="4.2" r="3.3" fill="#2d8a47"/><ellipse cx="6.1" cy="10.4" rx="6" ry="4.3" fill="#2d8a47"/></svg>
<div class="a nw" style="left:327px;top:195.7px;font-size:13px;line-height:16px;color:#e4e4e4;letter-spacing:-0.191px;">TheFatherMind</div>
<svg class="a" style="left:826px;top:198px" width="12" height="11" viewBox="0 0 12 11"><path d="M0.5 0.5 H11.5 V8 H4 L2 10.5 V8 H0.5 Z" fill="#6a6a6a"/></svg>
<svg class="a" style="left:842px;top:200px" width="12" height="8" viewBox="0 0 12 8"><path d="M0.8 4.5 L4 7 L11.2 1" fill="none" stroke="#e0a020" stroke-width="1.6"/></svg>
<svg class="a" style="left:309px;top:215px" width="13" height="15" viewBox="0 0 13 15"><circle cx="6.1" cy="4.2" r="3.3" fill="#2d8a47"/><ellipse cx="6.1" cy="10.4" rx="6" ry="4.3" fill="#2d8a47"/></svg>
<div class="a nw" style="left:327px;top:214.7px;font-size:13px;line-height:16px;color:#e4e4e4;letter-spacing:-0.179px;">TheFatherMind-</div>
<svg class="a" style="left:826px;top:217px" width="12" height="11" viewBox="0 0 12 11"><path d="M0.5 0.5 H11.5 V8 H4 L2 10.5 V8 H0.5 Z" fill="#6a6a6a"/></svg>
<svg class="a" style="left:842px;top:219px" width="12" height="8" viewBox="0 0 12 8"><path d="M0.8 4.5 L4 7 L11.2 1" fill="none" stroke="#e0a020" stroke-width="1.6"/></svg>
<svg class="a" style="left:273px;top:237px" width="6" height="10" viewBox="0 0 6 10"><path d="M0 0 L6 5 L0 10 Z" fill="#8a8a8a"/></svg>
<div class="a nw" style="left:291px;top:233.7px;font-size:13px;line-height:16px;color:#e4e4e4;letter-spacing:-0.221px;">--- AFK ---</div>
<svg class="a" style="left:826px;top:236px" width="12" height="11" viewBox="0 0 12 11"><path d="M0.5 0.5 H11.5 V8 H4 L2 10.5 V8 H0.5 Z" fill="#6a6a6a"/></svg>
<svg class="a" style="left:841.5px;top:233px" width="13" height="14" viewBox="0 0 13 14"><path d="M3 6 V3.3 C3 1.5 4.3 0.5 6 0.5 C7.7 0.5 9 1.5 9 3.3 V4" fill="none" stroke="#2fb04f" stroke-width="1.6"/><rect x="1" y="6.3" width="11" height="7" rx="1" fill="none" stroke="#2fb04f" stroke-width="1.6"/><rect x="5.7" y="8.3" width="1.6" height="3" fill="#2fb04f"/></svg>
<div class="a nw" style="left:291px;top:252.7px;font-size:13px;line-height:16px;color:#e4e4e4;letter-spacing:-0.026px;">sup mane</div>
<svg class="a" style="left:841.5px;top:252px" width="13" height="14" viewBox="0 0 13 14"><path d="M3 6 V3.8 C3 2 4.3 1 6 1 C7.7 1 9 2 9 3.8 V6" fill="none" stroke="#e04535" stroke-width="1.6"/><rect x="1" y="6.3" width="11" height="7" rx="1" fill="none" stroke="#e04535" stroke-width="1.6"/><rect x="5.7" y="8.3" width="1.6" height="3" fill="#e04535"/></svg>
<div class="a nw" style="left:291px;top:271.7px;font-size:13px;line-height:16px;color:#e4e4e4;letter-spacing:-0.105px;">Desahs Geopolitics</div>
<div class="a nw" style="left:291px;top:290.7px;font-size:13px;line-height:16px;color:#e4e4e4;letter-spacing:-0.160px;">Guest Gamer Area</div>
<svg class="a" style="left:273px;top:313px" width="6" height="10" viewBox="0 0 6 10"><path d="M0 0 L6 5 L0 10 Z" fill="#8a8a8a"/></svg>
<div class="a nw" style="left:291px;top:309.7px;font-size:13px;line-height:16px;color:#e4e4e4;letter-spacing:-0.169px;">Games</div>
<svg class="a" style="left:826px;top:312px" width="12" height="11" viewBox="0 0 12 11"><path d="M0.5 0.5 H11.5 V8 H4 L2 10.5 V8 H0.5 Z" fill="#f5b800"/></svg>
<svg class="a" style="left:841.5px;top:309px" width="13" height="14" viewBox="0 0 13 14"><path d="M3 6 V3.3 C3 1.5 4.3 0.5 6 0.5 C7.7 0.5 9 1.5 9 3.3 V4" fill="none" stroke="#2fb04f" stroke-width="1.6"/><rect x="1" y="6.3" width="11" height="7" rx="1" fill="none" stroke="#2fb04f" stroke-width="1.6"/><rect x="5.7" y="8.3" width="1.6" height="3" fill="#2fb04f"/></svg>
<div class="a nw" style="left:291px;top:328.7px;font-size:13px;line-height:16px;color:#e4e4e4;letter-spacing:-0.145px;">#Music</div>
<svg class="a" style="left:841.5px;top:328px" width="13" height="14" viewBox="0 0 13 14"><path d="M3 6 V3.8 C3 2 4.3 1 6 1 C7.7 1 9 2 9 3.8 V6" fill="none" stroke="#e04535" stroke-width="1.6"/><rect x="1" y="6.3" width="11" height="7" rx="1" fill="none" stroke="#e04535" stroke-width="1.6"/><rect x="5.7" y="8.3" width="1.6" height="3" fill="#e04535"/></svg>
<div class="a nw" style="left:291px;top:347.7px;font-size:13px;line-height:16px;color:#e4e4e4;letter-spacing:-0.621px;">FIX YOUR PTT</div>
<div class="a nw" style="left:291px;top:366.7px;font-size:13px;line-height:16px;color:#e4e4e4;letter-spacing:-0.097px;">Quarantine</div>
<svg class="a" style="left:826px;top:369px" width="12" height="11" viewBox="0 0 12 11"><path d="M0.5 0.5 H11.5 V8 H4 L2 10.5 V8 H0.5 Z" fill="#6a6a6a"/></svg>
<svg class="a" style="left:841.5px;top:366px" width="13" height="14" viewBox="0 0 13 14"><path d="M3 6 V3.8 C3 2 4.3 1 6 1 C7.7 1 9 2 9 3.8 V6" fill="none" stroke="#e04535" stroke-width="1.6"/><rect x="1" y="6.3" width="11" height="7" rx="1" fill="none" stroke="#e04535" stroke-width="1.6"/><rect x="5.7" y="8.3" width="1.6" height="3" fill="#e04535"/></svg>
<div class="a nw" style="left:291px;top:385.7px;font-size:13px;line-height:16px;color:#e4e4e4;letter-spacing:-0.169px;">#SafeSpace</div>
<div class="a nw" style="left:291px;top:404.7px;font-size:13px;line-height:16px;color:#e4e4e4;letter-spacing:-0.169px;">Rehab</div>
<svg class="a" style="left:289px;top:427px" width="14" height="13" viewBox="0 0 14 13"><path d="M6 3.5 L8 1.6 C9.2 0.5 11 0.5 12.2 1.6 C13.3 2.8 13.3 4.6 12.2 5.8 L10 8 M8 9.5 L6 11.4 C4.8 12.5 3 12.5 1.8 11.4 C0.7 10.2 0.7 8.4 1.8 7.2 L4 5 M5 8.5 L9 4.5" fill="none" stroke="#3a9ae8" stroke-width="1.7" stroke-linecap="round"/></svg>
<div class="a nw" style="left:307px;top:423.7px;font-size:13px;line-height:16px;color:#e4e4e4;letter-spacing:-0.108px;font-style:italic">Drunk Tank (High on drugs)</div>
<svg class="a" style="left:289px;top:446px" width="14" height="13" viewBox="0 0 14 13"><path d="M6 3.5 L8 1.6 C9.2 0.5 11 0.5 12.2 1.6 C13.3 2.8 13.3 4.6 12.2 5.8 L10 8 M8 9.5 L6 11.4 C4.8 12.5 3 12.5 1.8 11.4 C0.7 10.2 0.7 8.4 1.8 7.2 L4 5 M5 8.5 L9 4.5" fill="none" stroke="#3a9ae8" stroke-width="1.7" stroke-linecap="round"/></svg>
<div class="a nw" style="left:307px;top:442.7px;font-size:13px;line-height:16px;color:#e4e4e4;letter-spacing:-0.740px;font-style:italic">DISCORD</div>
<div class="a nw" style="left:291px;top:461.7px;font-size:13px;line-height:16px;color:#e4e4e4;letter-spacing:-0.648px;">DONALD TRUMP IS STILL PRESIDENT</div>
<svg class="a" style="left:842px;top:464px" width="12" height="11" viewBox="0 0 12 11"><path d="M0.5 0.5 H11.5 V8 H4 L2 10.5 V8 H0.5 Z" fill="#6a6a6a"/></svg>
<svg class="a" style="left:289px;top:484px" width="14" height="13" viewBox="0 0 14 13"><path d="M6 3.5 L8 1.6 C9.2 0.5 11 0.5 12.2 1.6 C13.3 2.8 13.3 4.6 12.2 5.8 L10 8 M8 9.5 L6 11.4 C4.8 12.5 3 12.5 1.8 11.4 C0.7 10.2 0.7 8.4 1.8 7.2 L4 5 M5 8.5 L9 4.5" fill="none" stroke="#3a9ae8" stroke-width="1.7" stroke-linecap="round"/></svg>
<div class="a nw" style="left:307px;top:480.7px;font-size:13px;line-height:16px;color:#e4e4e4;letter-spacing:-0.336px;font-style:italic">She likes Tom AND JERRY</div>
<div class="a nw" style="left:291px;top:499.7px;font-size:13px;line-height:16px;color:#e4e4e4;letter-spacing:-0.139px;">Penis People Palace</div>
<svg class="a" style="left:273px;top:522px" width="6" height="10" viewBox="0 0 6 10"><path d="M0 0 L6 5 L0 10 Z" fill="#8a8a8a"/></svg>
<div class="a nw" style="left:291px;top:518.7px;font-size:13px;line-height:16px;color:#e4e4e4;letter-spacing:-0.095px;">Ths server deos not allow channels with the word PENIS in them</div>
<div class="a nw" style="left:291px;top:537.7px;font-size:13px;line-height:16px;color:#e4e4e4;letter-spacing:-0.136px;">Movie Theater</div>
<svg class="a" style="left:842px;top:540px" width="12" height="11" viewBox="0 0 12 11"><path d="M0.5 0.5 H11.5 V8 H4 L2 10.5 V8 H0.5 Z" fill="#6a6a6a"/></svg>
<div class="a nw" style="left:291px;top:556.7px;font-size:13px;line-height:16px;color:#e4e4e4;letter-spacing:-0.133px;">Coolest Channel Ever</div>
<svg class="a" style="left:842px;top:559px" width="12" height="11" viewBox="0 0 12 11"><path d="M0.5 0.5 H11.5 V8 H4 L2 10.5 V8 H0.5 Z" fill="#6a6a6a"/></svg>
<div class="a nw" style="left:291px;top:575.7px;font-size:13px;line-height:16px;color:#e4e4e4;letter-spacing:-0.680px;">PRIVATE ROOM</div>
<svg class="a" style="left:841.5px;top:575px" width="13" height="14" viewBox="0 0 13 14"><path d="M3 6 V3.8 C3 2 4.3 1 6 1 C7.7 1 9 2 9 3.8 V6" fill="none" stroke="#e04535" stroke-width="1.6"/><rect x="1" y="6.3" width="11" height="7" rx="1" fill="none" stroke="#e04535" stroke-width="1.6"/><rect x="5.7" y="8.3" width="1.6" height="3" fill="#e04535"/></svg>
<div class="a nw" style="left:291px;top:594.7px;font-size:13px;line-height:16px;color:#e4e4e4;letter-spacing:-0.179px;">CoolKidHangout</div>
<svg class="a" style="left:842px;top:597px" width="12" height="11" viewBox="0 0 12 11"><path d="M0.5 0.5 H11.5 V8 H4 L2 10.5 V8 H0.5 Z" fill="#6a6a6a"/></svg>
<svg class="a" style="left:289px;top:617px" width="14" height="13" viewBox="0 0 14 13"><path d="M6 3.5 L8 1.6 C9.2 0.5 11 0.5 12.2 1.6 C13.3 2.8 13.3 4.6 12.2 5.8 L10 8 M8 9.5 L6 11.4 C4.8 12.5 3 12.5 1.8 11.4 C0.7 10.2 0.7 8.4 1.8 7.2 L4 5 M5 8.5 L9 4.5" fill="none" stroke="#3a9ae8" stroke-width="1.7" stroke-linecap="round"/></svg>
<div class="a nw" style="left:307px;top:613.7px;font-size:13px;line-height:16px;color:#e4e4e4;letter-spacing:-0.156px;font-style:italic">Gas Chamber</div>
<svg class="a" style="left:273px;top:617px" width="6" height="10" viewBox="0 0 6 10"><path d="M0 0 L6 5 L0 10 Z" fill="#8a8a8a"/></svg>
<svg class="a" style="left:841.5px;top:613px" width="13" height="14" viewBox="0 0 13 14"><path d="M3 6 V3.8 C3 2 4.3 1 6 1 C7.7 1 9 2 9 3.8 V6" fill="none" stroke="#e04535" stroke-width="1.6"/><rect x="1" y="6.3" width="11" height="7" rx="1" fill="none" stroke="#e04535" stroke-width="1.6"/><rect x="5.7" y="8.3" width="1.6" height="3" fill="#e04535"/></svg>
<svg class="a" style="left:273px;top:636px" width="6" height="10" viewBox="0 0 6 10"><path d="M0 0 L6 5 L0 10 Z" fill="#8a8a8a"/></svg>
<div class="a nw" style="left:291px;top:632.7px;font-size:13px;line-height:16px;color:#e4e4e4;letter-spacing:-0.204px;">GameCack</div>
<div class="a nw" style="left:291px;top:651.7px;font-size:13px;line-height:16px;color:#e4e4e4;letter-spacing:-0.351px;">S K Y N 3 T</div>
<div class="a nw" style="left:291px;top:670.7px;font-size:13px;line-height:16px;color:#e4e4e4;letter-spacing:-0.133px;">Louisiana Hot Pocket</div>
<svg class="a" style="left:842px;top:673px" width="12" height="11" viewBox="0 0 12 11"><path d="M0.5 0.5 H11.5 V8 H4 L2 10.5 V8 H0.5 Z" fill="#f5b800"/></svg>
<div class="a nw" style="left:291px;top:689.7px;font-size:13px;line-height:16px;color:#e4e4e4;letter-spacing:-0.169px;">Viper</div>
<svg class="a" style="left:273px;top:712px" width="6" height="10" viewBox="0 0 6 10"><path d="M0 0 L6 5 L0 10 Z" fill="#8a8a8a"/></svg>
<div class="a nw" style="left:291px;top:708.7px;font-size:13px;line-height:16px;color:#e4e4e4;letter-spacing:-0.115px;">Development Area</div>
<svg class="a" style="left:842px;top:711px" width="12" height="11" viewBox="0 0 12 11"><path d="M0.5 0.5 H11.5 V8 H4 L2 10.5 V8 H0.5 Z" fill="#f5b800"/></svg>
</div>
</body></html>
